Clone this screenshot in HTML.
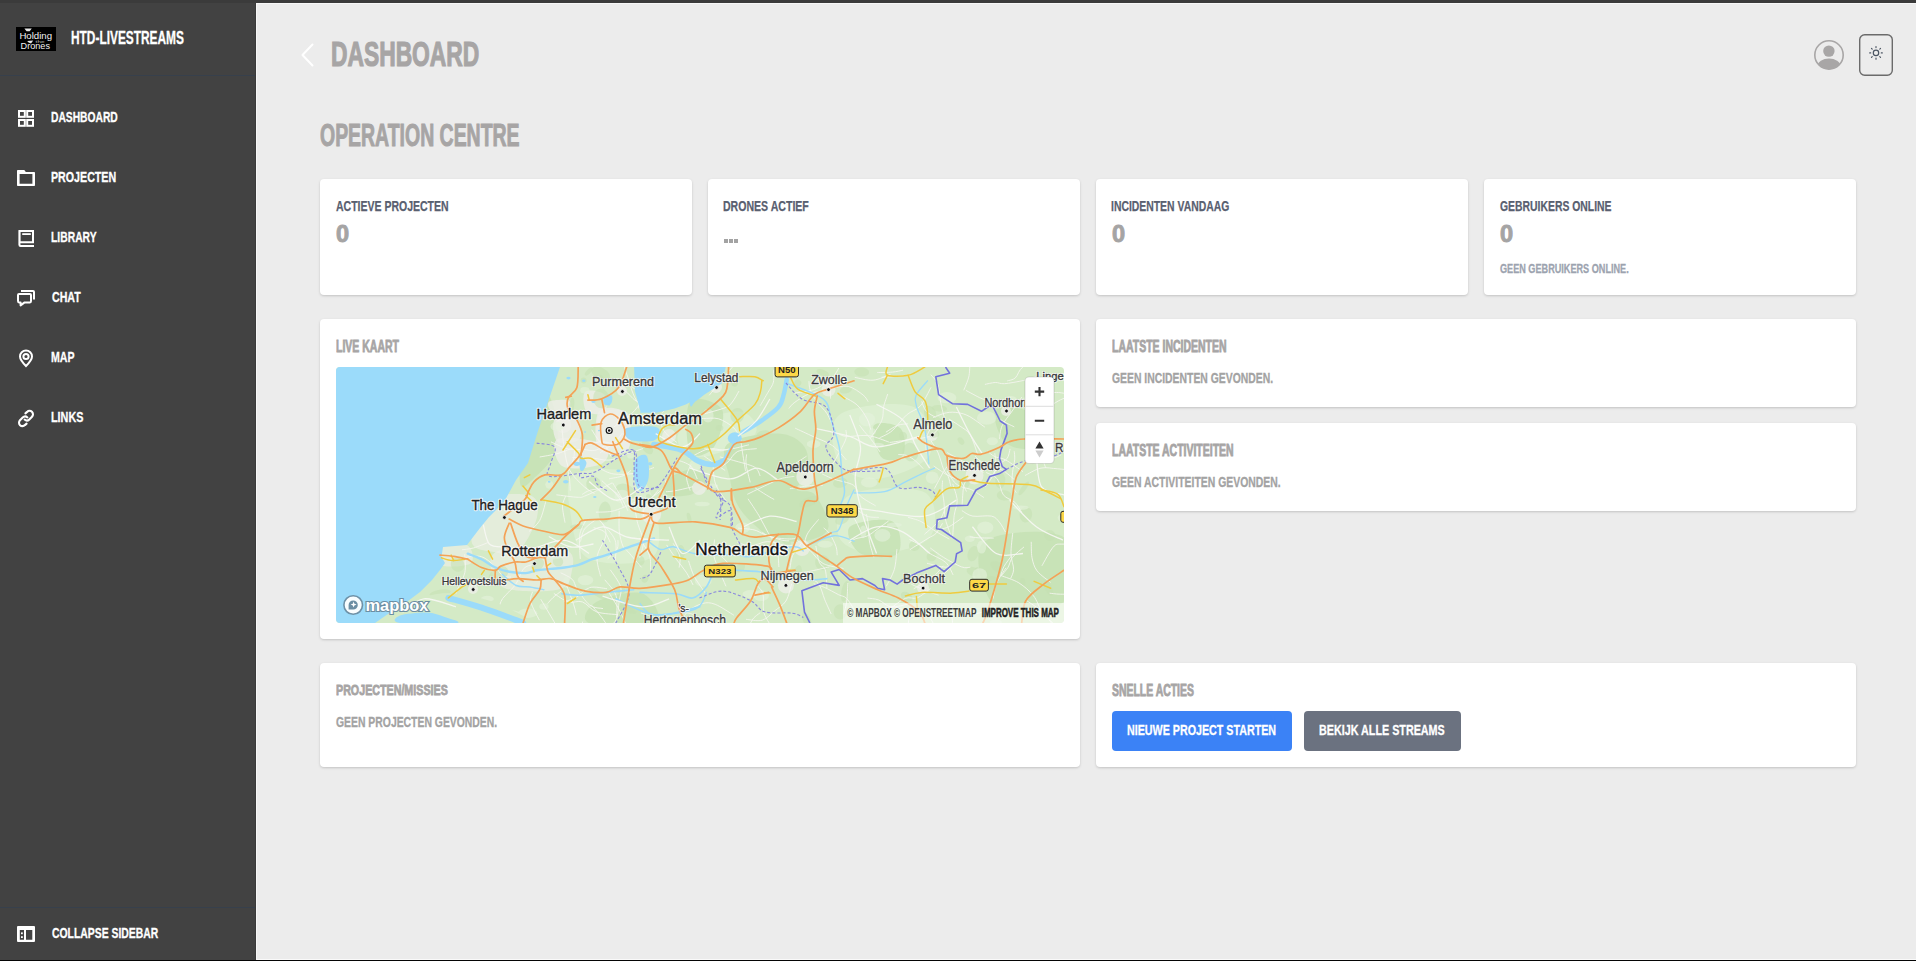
<!DOCTYPE html>
<html><head><meta charset="utf-8"><style>
html,body{margin:0;padding:0;width:1916px;height:961px;overflow:hidden;background:#ececec;font-family:"Liberation Sans",sans-serif;}
.t{position:absolute;white-space:nowrap;line-height:1;font-weight:700;transform-origin:0 0;}
.abs{position:absolute;}
.card{position:absolute;background:#fff;border-radius:4px;box-shadow:0 1px 3px rgba(0,0,0,0.12),0 1px 2px rgba(0,0,0,0.06);}
</style></head><body>
<div class="abs" style="left:0;top:0;width:256px;height:961px;background:#424242;"></div>
<div class="abs" style="left:255px;top:0;width:1px;height:961px;background:#3a3a3a;"></div>
<div class="abs" style="left:0;top:0;width:1916px;height:3px;background:#3b3b3b;"></div>
<div class="abs" style="left:256px;top:3px;width:1660px;height:1px;background:#f7f7f7;"></div>
<div class="abs" style="left:256px;top:3px;width:1px;height:957px;background:#f7f7f7;"></div>
<div class="abs" style="left:256px;top:959px;width:1660px;height:1px;background:#fafafa;"></div>
<div class="abs" style="left:0;top:960px;width:1916px;height:1px;background:#050505;"></div>
<div class="abs" style="left:0;top:75px;width:255px;height:1px;background:#37404c;"></div>
<div class="abs" style="left:0;top:907px;width:255px;height:1px;background:#37404c;"></div>

<div class="card" style="left:320px;top:179px;width:372px;height:116px;"></div>
<div class="card" style="left:708px;top:179px;width:372px;height:116px;"></div>
<div class="card" style="left:1096px;top:179px;width:372px;height:116px;"></div>
<div class="card" style="left:1484px;top:179px;width:372px;height:116px;"></div>
<div class="card" style="left:320px;top:319px;width:760px;height:320px;"></div>
<div class="card" style="left:1096px;top:319px;width:760px;height:88px;"></div>
<div class="card" style="left:1096px;top:423px;width:760px;height:88px;"></div>
<div class="card" style="left:320px;top:663px;width:760px;height:104px;"></div>
<div class="card" style="left:1096px;top:663px;width:760px;height:104px;"></div>

<div class="abs" style="left:1112px;top:711px;width:180px;height:40px;background:#3b82f6;border-radius:4px;"></div>
<div class="abs" style="left:1304px;top:711px;width:157px;height:40px;background:#6b7280;border-radius:4px;"></div>

<div class="abs" style="left:724px;top:239px;width:4px;height:4px;background:#a3a3a3;"></div>
<div class="abs" style="left:729px;top:239px;width:4px;height:4px;background:#a3a3a3;"></div>
<div class="abs" style="left:734px;top:239px;width:4px;height:4px;background:#a3a3a3;"></div>

<div class="abs" style="left:336px;top:367px;width:728px;height:256px;border-radius:4px;overflow:hidden;">
<svg width="728" height="256" viewBox="336 367 728 256" style="display:block;font-family:'Liberation Sans',sans-serif">
<rect x="336" y="367" width="728" height="256" fill="#d4eac6"/>
<path d="M683.5,427.5 C693.1,421.1 727.3,410.5 739.2,411.6 C751.2,412.6 760.5,426.4 755.2,433.9 C749.9,441.3 719.6,453.5 707.4,456.2 C695.2,458.8 685.9,454.6 681.9,449.8 C677.9,445.0 673.9,433.9 683.5,427.5 Z" fill="#dcefd1"/>
<path d="M839.2,414.9 C851.6,405.6 898.7,400.3 913.8,407.0 C928.9,413.6 936.0,442.9 929.7,454.9 C923.5,466.9 891.6,477.5 876.5,478.9 C861.4,480.2 845.4,473.6 839.2,462.9 C833.0,452.2 826.7,424.3 839.2,414.9 Z" fill="#dcefd1"/>
<path d="M849.8,494.9 C864.0,487.3 911.1,485.1 924.4,492.2 C937.7,499.3 937.7,527.3 929.7,537.5 C921.8,547.7 891.6,553.5 876.5,553.5 C861.4,553.5 843.6,547.3 839.2,537.5 C834.7,527.7 835.6,502.4 849.8,494.9 Z" fill="#dcefd1"/>
<path d="M575.8,473.6 C587.8,467.8 629.1,465.6 642.4,478.9 C655.7,492.2 664.6,540.2 655.7,553.5 C646.9,566.8 603.3,565.5 589.1,558.8 C574.9,552.2 572.7,527.8 570.5,513.5 C568.3,499.3 563.8,479.4 575.8,473.6 Z" fill="#dcefd1"/>
<path d="M727.3,444.3 C735.3,436.7 765.0,433.2 777.9,433.6 C790.8,434.0 799.7,440.3 804.5,446.9 C809.4,453.6 808.5,466.4 807.2,473.6 C805.9,480.7 795.2,486.0 796.6,489.5 C797.9,493.1 809.9,488.6 815.2,494.9 C820.5,501.1 829.4,519.3 828.5,526.8 C827.6,534.4 818.3,537.9 809.9,540.1 C801.4,542.4 786.8,542.4 777.9,540.1 C769.0,537.9 763.3,532.6 756.6,526.8 C749.9,521.1 742.4,513.5 737.9,505.5 C733.5,497.5 731.7,489.1 730.0,478.9 C728.2,468.7 719.3,451.8 727.3,444.3 Z" fill="#c6e2b5" opacity="0.9"/>
<path d="M669.2,478.5 C673.9,474.2 688.5,468.4 694.6,468.9 C700.8,469.4 706.3,477.4 705.8,481.6 C705.3,485.9 698.1,492.3 691.5,494.4 C684.8,496.5 669.7,497.0 666.0,494.4 C662.3,491.7 664.4,482.7 669.2,478.5 Z" fill="#c6e2b5" opacity="0.9"/>
<path d="M873.8,425.6 C876.9,420.7 895.6,423.4 900.4,428.3 C905.3,433.2 906.2,450.0 903.1,454.9 C900.0,459.8 886.7,462.5 881.8,457.6 C876.9,452.7 870.7,430.5 873.8,425.6 Z" fill="#c6e2b5" opacity="0.9"/>
<path d="M983.0,542.8 C994.3,531.3 1050.5,527.7 1064.0,537.5 C1077.5,547.3 1075.3,589.9 1064.0,601.4 C1052.7,613.0 1009.8,616.5 996.3,606.7 C982.8,597.0 971.7,554.4 983.0,542.8 Z" fill="#c6e2b5" opacity="0.9"/>
<path d="M996.3,409.6 C1001.7,405.2 1030.5,408.7 1036.3,414.9 C1042.1,421.2 1036.3,442.5 1031.0,446.9 C1025.6,451.4 1010.1,447.8 1004.3,441.6 C998.6,435.4 991.0,414.1 996.3,409.6 Z" fill="#c6e2b5" opacity="0.9"/>
<path d="M527.8,415.0 C532.7,400.8 544.3,391.0 549.2,396.3 C554.0,401.6 559.8,433.2 557.2,446.9 C554.5,460.7 539.4,473.1 533.2,478.9 C527.0,484.7 520.7,492.2 519.9,481.6 C519.0,470.9 523.0,429.2 527.8,415.0 Z" fill="#c6e2b5" opacity="0.9"/>
<path d="M690.0,401.6 C695.3,394.5 718.0,402.1 722.0,409.6 C726.0,417.2 719.3,439.8 714.0,446.9 C708.6,454.0 694.0,459.8 690.0,452.2 C686.0,444.7 684.7,408.7 690.0,401.6 Z" fill="#c6e2b5" opacity="0.9"/>
<path d="M849.8,526.8 C855.2,521.5 884.5,517.1 892.5,521.5 C900.4,525.9 903.1,548.1 897.8,553.5 C892.5,558.8 868.5,557.9 860.5,553.5 C852.5,549.0 844.5,532.2 849.8,526.8 Z" fill="#c6e2b5" opacity="0.9"/>
<path d="M597.1,601.5 C606.0,596.5 632.7,589.9 642.4,593.5 C652.2,597.1 664.6,618.1 655.7,623.1 C646.9,628.0 598.9,626.7 589.1,623.1 C579.4,619.5 588.2,606.4 597.1,601.5 Z" fill="#c6e2b5" opacity="0.9"/>
<path d="M481.5,501.1 C491.2,493.2 520.7,492.8 530.0,495.5 C539.2,498.3 539.0,508.2 536.9,517.7 C534.8,527.1 524.4,546.5 517.5,552.3 C510.6,558.1 503.0,553.9 495.4,552.3 C487.8,550.7 474.1,551.1 471.8,542.6 C469.5,534.1 471.8,508.9 481.5,501.1 Z" fill="#efefe9" opacity="0.6"/>
<path d="M495.4,552.3 C505.8,546.1 551.9,546.1 564.6,549.5 C577.3,553.0 572.7,566.4 571.5,573.1 C570.4,579.7 569.2,587.4 557.7,589.7 C546.1,592.0 512.7,593.1 502.3,586.9 C491.9,580.7 485.0,558.5 495.4,552.3 Z" fill="#efefe9" opacity="0.6"/>
<path d="M440.0,544.0 C444.6,540.8 462.6,542.1 467.7,545.4 C472.8,548.6 475.1,560.1 470.5,563.4 C465.8,566.6 445.1,568.0 440.0,564.8 C434.9,561.5 435.4,547.2 440.0,544.0 Z" fill="#efefe9" opacity="0.6"/>
<path d="M599.1,414.8 C603.6,408.7 623.0,407.3 627.8,413.2 C632.5,419.0 632.3,443.7 627.8,449.8 C623.3,455.9 605.5,455.6 600.7,449.8 C595.9,444.0 594.6,420.9 599.1,414.8 Z" fill="#efefe9" opacity="0.6"/>
<circle cx="563.3" cy="425" r="8" fill="#efefe9" opacity="0.75"/>
<circle cx="651.2" cy="514" r="10" fill="#efefe9" opacity="0.75"/>
<circle cx="805.3" cy="477" r="9" fill="#efefe9" opacity="0.75"/>
<circle cx="716" cy="387" r="6" fill="#efefe9" opacity="0.75"/>
<circle cx="828.5" cy="389.6" r="7" fill="#efefe9" opacity="0.75"/>
<circle cx="974.5" cy="475.4" r="9" fill="#efefe9" opacity="0.75"/>
<circle cx="785.9" cy="585.4" r="8" fill="#efefe9" opacity="0.75"/>
<circle cx="802" cy="548" r="8" fill="#efefe9" opacity="0.75"/>
<circle cx="932" cy="435" r="6" fill="#efefe9" opacity="0.75"/>
<circle cx="699" cy="488" r="7" fill="#efefe9" opacity="0.75"/>
<circle cx="669" cy="436" r="7" fill="#efefe9" opacity="0.75"/>
<circle cx="923" cy="588" r="6" fill="#efefe9" opacity="0.75"/>
<circle cx="1006" cy="411" r="5" fill="#efefe9" opacity="0.75"/>
<circle cx="473" cy="589" r="5" fill="#efefe9" opacity="0.75"/>
<circle cx="622" cy="391" r="5" fill="#efefe9" opacity="0.75"/>
<path d="M554.7,419.6 C557.9,415.7 572.7,415.0 576.8,418.2 C581.0,421.4 582.8,435.0 579.6,438.9 C576.4,442.9 561.6,444.9 557.5,441.7 C553.3,438.5 551.5,423.5 554.7,419.6 Z" fill="#eeeee8" opacity="0.8"/>
<path d="M599.0,411.3 C603.6,405.3 621.8,407.6 626.7,414.0 C631.5,420.5 632.6,444.0 628.0,450.0 C623.4,456.0 603.8,456.5 599.0,450.0 C594.1,443.6 594.4,417.3 599.0,411.3 Z" fill="#eeeee8" opacity="0.8"/>
<path d="M557.5,438.9 C564.4,435.3 597.1,440.3 604.5,444.5 C611.9,448.6 608.7,460.2 601.7,463.8 C594.8,467.5 570.4,470.8 563.0,466.6 C555.6,462.5 550.6,442.6 557.5,438.9 Z" fill="#eeeee8" opacity="0.8"/>
<path d="M585.1,391.9 C588.1,389.1 601.3,391.2 604.5,394.7 C607.7,398.1 607.5,409.9 604.5,412.7 C601.5,415.4 589.8,414.7 586.5,411.3 C583.3,407.8 582.1,394.7 585.1,391.9 Z" fill="#eeeee8" opacity="0.8"/>
<path d="M549.2,401.6 C551.9,399.7 565.3,399.1 568.5,400.2 C571.8,401.4 571.3,406.7 568.5,408.5 C565.8,410.3 555.2,412.4 551.9,411.3 C548.7,410.1 546.4,403.4 549.2,401.6 Z" fill="#eeeee8" opacity="0.8"/>
<ellipse cx="571.8" cy="405.6" rx="8.2" ry="2.4" transform="rotate(96 571.8 405.6)" fill="#c4e0b3" opacity="0.55"/>
<ellipse cx="602.2" cy="381.8" rx="7.1" ry="2.2" transform="rotate(78 602.2 381.8)" fill="#c4e0b3" opacity="0.55"/>
<ellipse cx="645.0" cy="578.7" rx="4.0" ry="3.3" transform="rotate(113 645.0 578.7)" fill="#c4e0b3" opacity="0.55"/>
<ellipse cx="1025.9" cy="514.7" rx="6.2" ry="7.9" transform="rotate(8 1025.9 514.7)" fill="#c4e0b3" opacity="0.55"/>
<ellipse cx="961.0" cy="441.1" rx="4.2" ry="2.7" transform="rotate(56 961.0 441.1)" fill="#c4e0b3" opacity="0.55"/>
<ellipse cx="930.1" cy="413.3" rx="7.7" ry="5.8" transform="rotate(67 930.1 413.3)" fill="#c4e0b3" opacity="0.55"/>
<ellipse cx="734.8" cy="383.1" rx="3.5" ry="3.2" transform="rotate(122 734.8 383.1)" fill="#c4e0b3" opacity="0.55"/>
<ellipse cx="647.3" cy="447.4" rx="7.7" ry="4.7" transform="rotate(54 647.3 447.4)" fill="#c4e0b3" opacity="0.55"/>
<ellipse cx="914.3" cy="545.9" rx="5.0" ry="5.4" transform="rotate(95 914.3 545.9)" fill="#c4e0b3" opacity="0.55"/>
<ellipse cx="973.1" cy="553.7" rx="5.3" ry="7.9" transform="rotate(21 973.1 553.7)" fill="#c4e0b3" opacity="0.55"/>
<ellipse cx="640.4" cy="560.8" rx="4.2" ry="4.9" transform="rotate(7 640.4 560.8)" fill="#c4e0b3" opacity="0.55"/>
<ellipse cx="822.5" cy="562.7" rx="7.6" ry="7.3" transform="rotate(56 822.5 562.7)" fill="#c4e0b3" opacity="0.55"/>
<ellipse cx="842.2" cy="519.2" rx="7.6" ry="4.7" transform="rotate(151 842.2 519.2)" fill="#c4e0b3" opacity="0.55"/>
<ellipse cx="1023.7" cy="488.4" rx="8.3" ry="2.4" transform="rotate(126 1023.7 488.4)" fill="#c4e0b3" opacity="0.55"/>
<ellipse cx="807.1" cy="621.2" rx="9.6" ry="3.7" transform="rotate(69 807.1 621.2)" fill="#c4e0b3" opacity="0.55"/>
<ellipse cx="822.8" cy="372.8" rx="6.7" ry="3.0" transform="rotate(21 822.8 372.8)" fill="#c4e0b3" opacity="0.55"/>
<ellipse cx="620.6" cy="590.1" rx="3.6" ry="4.7" transform="rotate(99 620.6 590.1)" fill="#c4e0b3" opacity="0.55"/>
<ellipse cx="979.1" cy="576.7" rx="9.9" ry="3.7" transform="rotate(75 979.1 576.7)" fill="#c4e0b3" opacity="0.55"/>
<ellipse cx="597.2" cy="593.4" rx="10.7" ry="2.9" transform="rotate(32 597.2 593.4)" fill="#c4e0b3" opacity="0.55"/>
<ellipse cx="689.1" cy="517.8" rx="5.1" ry="2.0" transform="rotate(75 689.1 517.8)" fill="#c4e0b3" opacity="0.55"/>
<ellipse cx="604.8" cy="512.0" rx="10.6" ry="6.1" transform="rotate(93 604.8 512.0)" fill="#c4e0b3" opacity="0.55"/>
<ellipse cx="785.6" cy="540.1" rx="3.4" ry="7.4" transform="rotate(140 785.6 540.1)" fill="#c4e0b3" opacity="0.55"/>
<ellipse cx="972.6" cy="571.3" rx="6.1" ry="4.4" transform="rotate(19 972.6 571.3)" fill="#c4e0b3" opacity="0.55"/>
<ellipse cx="797.8" cy="382.9" rx="3.5" ry="3.3" transform="rotate(29 797.8 382.9)" fill="#c4e0b3" opacity="0.55"/>
<ellipse cx="583.6" cy="380.5" rx="3.0" ry="2.9" transform="rotate(18 583.6 380.5)" fill="#c4e0b3" opacity="0.55"/>
<ellipse cx="600.7" cy="373.5" rx="10.0" ry="5.7" transform="rotate(27 600.7 373.5)" fill="#c4e0b3" opacity="0.55"/>
<ellipse cx="601.1" cy="398.4" rx="9.8" ry="8.0" transform="rotate(84 601.1 398.4)" fill="#c4e0b3" opacity="0.55"/>
<ellipse cx="688.2" cy="389.0" rx="3.8" ry="4.1" transform="rotate(48 688.2 389.0)" fill="#c4e0b3" opacity="0.55"/>
<ellipse cx="939.4" cy="408.3" rx="3.2" ry="7.7" transform="rotate(95 939.4 408.3)" fill="#c4e0b3" opacity="0.55"/>
<ellipse cx="1048.3" cy="588.0" rx="8.6" ry="3.6" transform="rotate(66 1048.3 588.0)" fill="#c4e0b3" opacity="0.55"/>
<ellipse cx="457.6" cy="564.6" rx="7.3" ry="6.7" transform="rotate(59 457.6 564.6)" fill="#c4e0b3" opacity="0.55"/>
<ellipse cx="498.4" cy="574.7" rx="10.9" ry="7.1" transform="rotate(145 498.4 574.7)" fill="#c4e0b3" opacity="0.55"/>
<ellipse cx="931.7" cy="556.4" rx="4.8" ry="5.1" transform="rotate(64 931.7 556.4)" fill="#c4e0b3" opacity="0.55"/>
<ellipse cx="840.2" cy="611.9" rx="6.6" ry="7.6" transform="rotate(178 840.2 611.9)" fill="#c4e0b3" opacity="0.55"/>
<ellipse cx="1031.2" cy="460.3" rx="4.8" ry="3.4" transform="rotate(35 1031.2 460.3)" fill="#c4e0b3" opacity="0.55"/>
<ellipse cx="991.4" cy="582.2" rx="6.8" ry="5.9" transform="rotate(144 991.4 582.2)" fill="#c4e0b3" opacity="0.55"/>
<ellipse cx="998.3" cy="567.3" rx="9.0" ry="4.9" transform="rotate(32 998.3 567.3)" fill="#c4e0b3" opacity="0.55"/>
<ellipse cx="910.5" cy="452.1" rx="9.4" ry="7.8" transform="rotate(71 910.5 452.1)" fill="#c4e0b3" opacity="0.55"/>
<ellipse cx="628.2" cy="609.4" rx="8.8" ry="3.0" transform="rotate(23 628.2 609.4)" fill="#c4e0b3" opacity="0.55"/>
<ellipse cx="446.0" cy="598.6" rx="9.5" ry="2.9" transform="rotate(149 446.0 598.6)" fill="#c4e0b3" opacity="0.55"/>
<ellipse cx="1049.7" cy="535.3" rx="5.8" ry="5.3" transform="rotate(24 1049.7 535.3)" fill="#c4e0b3" opacity="0.55"/>
<ellipse cx="809.0" cy="501.8" rx="10.5" ry="4.6" transform="rotate(157 809.0 501.8)" fill="#c4e0b3" opacity="0.55"/>
<ellipse cx="937.4" cy="421.0" rx="5.0" ry="3.8" transform="rotate(43 937.4 421.0)" fill="#c4e0b3" opacity="0.55"/>
<ellipse cx="762.9" cy="433.4" rx="6.4" ry="2.8" transform="rotate(164 762.9 433.4)" fill="#c4e0b3" opacity="0.55"/>
<ellipse cx="593.6" cy="484.3" rx="7.7" ry="7.4" transform="rotate(76 593.6 484.3)" fill="#c4e0b3" opacity="0.55"/>
<ellipse cx="1004.1" cy="495.4" rx="7.3" ry="5.1" transform="rotate(3 1004.1 495.4)" fill="#c4e0b3" opacity="0.55"/>
<ellipse cx="656.4" cy="413.9" rx="3.0" ry="6.8" transform="rotate(31 656.4 413.9)" fill="#c4e0b3" opacity="0.55"/>
<ellipse cx="680.7" cy="552.6" rx="7.5" ry="4.0" transform="rotate(93 680.7 552.6)" fill="#c4e0b3" opacity="0.55"/>
<ellipse cx="740.4" cy="567.8" rx="3.8" ry="5.4" transform="rotate(45 740.4 567.8)" fill="#c4e0b3" opacity="0.55"/>
<ellipse cx="537.6" cy="564.7" rx="7.1" ry="5.4" transform="rotate(137 537.6 564.7)" fill="#c4e0b3" opacity="0.55"/>
<ellipse cx="1000.3" cy="480.5" rx="7.9" ry="5.0" transform="rotate(92 1000.3 480.5)" fill="#c4e0b3" opacity="0.55"/>
<ellipse cx="840.3" cy="482.8" rx="7.3" ry="4.9" transform="rotate(169 840.3 482.8)" fill="#c4e0b3" opacity="0.55"/>
<ellipse cx="845.0" cy="591.4" rx="10.5" ry="3.6" transform="rotate(101 845.0 591.4)" fill="#c4e0b3" opacity="0.55"/>
<ellipse cx="1022.7" cy="582.0" rx="4.1" ry="2.7" transform="rotate(80 1022.7 582.0)" fill="#c4e0b3" opacity="0.55"/>
<ellipse cx="906.7" cy="596.6" rx="4.2" ry="6.3" transform="rotate(119 906.7 596.6)" fill="#c4e0b3" opacity="0.55"/>
<ellipse cx="440.1" cy="593.0" rx="10.7" ry="3.3" transform="rotate(171 440.1 593.0)" fill="#c4e0b3" opacity="0.55"/>
<ellipse cx="625.9" cy="491.7" rx="10.9" ry="7.0" transform="rotate(29 625.9 491.7)" fill="#c4e0b3" opacity="0.55"/>
<ellipse cx="650.1" cy="499.0" rx="5.7" ry="3.2" transform="rotate(57 650.1 499.0)" fill="#c4e0b3" opacity="0.55"/>
<ellipse cx="861.7" cy="372.0" rx="7.4" ry="4.6" transform="rotate(3 861.7 372.0)" fill="#c4e0b3" opacity="0.55"/>
<ellipse cx="577.3" cy="526.7" rx="7.1" ry="2.4" transform="rotate(177 577.3 526.7)" fill="#c4e0b3" opacity="0.55"/>
<ellipse cx="909.9" cy="615.8" rx="3.8" ry="3.6" transform="rotate(7 909.9 615.8)" fill="#c4e0b3" opacity="0.55"/>
<ellipse cx="903.1" cy="436.2" rx="4.0" ry="4.5" transform="rotate(164 903.1 436.2)" fill="#c4e0b3" opacity="0.55"/>
<ellipse cx="932.2" cy="433.2" rx="4.2" ry="7.5" transform="rotate(103 932.2 433.2)" fill="#c4e0b3" opacity="0.55"/>
<ellipse cx="845.9" cy="389.9" rx="3.5" ry="6.1" transform="rotate(77 845.9 389.9)" fill="#c4e0b3" opacity="0.55"/>
<ellipse cx="797.9" cy="572.2" rx="3.7" ry="7.1" transform="rotate(12 797.9 572.2)" fill="#c4e0b3" opacity="0.55"/>
<ellipse cx="964.1" cy="483.2" rx="5.7" ry="5.3" transform="rotate(167 964.1 483.2)" fill="#c4e0b3" opacity="0.55"/>
<ellipse cx="719.6" cy="428.0" rx="3.9" ry="3.0" transform="rotate(9 719.6 428.0)" fill="#c4e0b3" opacity="0.55"/>
<ellipse cx="558.0" cy="561.4" rx="5.3" ry="5.0" transform="rotate(32 558.0 561.4)" fill="#c4e0b3" opacity="0.55"/>
<ellipse cx="588.6" cy="371.6" rx="5.0" ry="2.1" transform="rotate(132 588.6 371.6)" fill="#c4e0b3" opacity="0.55"/>
<ellipse cx="737.2" cy="415.5" rx="6.8" ry="7.6" transform="rotate(19 737.2 415.5)" fill="#c4e0b3" opacity="0.55"/>
<ellipse cx="932.2" cy="477.6" rx="6.5" ry="6.2" fill="#e4f2dc" opacity="0.6"/>
<ellipse cx="622.2" cy="496.7" rx="7.8" ry="6.9" fill="#e4f2dc" opacity="0.6"/>
<ellipse cx="585.5" cy="580.1" rx="7.9" ry="5.2" fill="#e4f2dc" opacity="0.6"/>
<ellipse cx="630.6" cy="456.0" rx="3.4" ry="2.6" fill="#e4f2dc" opacity="0.6"/>
<ellipse cx="969.8" cy="538.7" rx="5.0" ry="3.2" fill="#e4f2dc" opacity="0.6"/>
<ellipse cx="549.3" cy="484.6" rx="4.1" ry="4.2" fill="#e4f2dc" opacity="0.6"/>
<ellipse cx="527.6" cy="613.2" rx="9.8" ry="4.7" fill="#e4f2dc" opacity="0.6"/>
<ellipse cx="514.0" cy="614.2" rx="5.2" ry="3.8" fill="#e4f2dc" opacity="0.6"/>
<ellipse cx="336.8" cy="464.7" rx="6.3" ry="4.5" fill="#e4f2dc" opacity="0.6"/>
<ellipse cx="339.6" cy="434.6" rx="3.6" ry="4.0" fill="#e4f2dc" opacity="0.6"/>
<ellipse cx="557.5" cy="426.6" rx="7.1" ry="4.6" fill="#e4f2dc" opacity="0.6"/>
<ellipse cx="882.4" cy="535.3" rx="8.0" ry="6.4" fill="#e4f2dc" opacity="0.6"/>
<ellipse cx="619.6" cy="450.5" rx="9.9" ry="2.7" fill="#e4f2dc" opacity="0.6"/>
<ellipse cx="863.2" cy="531.7" rx="3.3" ry="6.2" fill="#e4f2dc" opacity="0.6"/>
<ellipse cx="985.3" cy="527.6" rx="8.1" ry="6.1" fill="#e4f2dc" opacity="0.6"/>
<ellipse cx="703.2" cy="580.7" rx="8.6" ry="6.1" fill="#e4f2dc" opacity="0.6"/>
<ellipse cx="761.2" cy="595.6" rx="7.8" ry="5.5" fill="#e4f2dc" opacity="0.6"/>
<ellipse cx="742.6" cy="527.7" rx="7.4" ry="5.4" fill="#e4f2dc" opacity="0.6"/>
<ellipse cx="692.2" cy="367.8" rx="8.6" ry="5.7" fill="#e4f2dc" opacity="0.6"/>
<ellipse cx="702.2" cy="504.0" rx="7.6" ry="2.3" fill="#e4f2dc" opacity="0.6"/>
<ellipse cx="872.4" cy="431.6" rx="3.5" ry="3.3" fill="#e4f2dc" opacity="0.6"/>
<ellipse cx="867.0" cy="419.5" rx="8.2" ry="6.9" fill="#e4f2dc" opacity="0.6"/>
<ellipse cx="695.6" cy="464.9" rx="6.4" ry="5.4" fill="#e4f2dc" opacity="0.6"/>
<ellipse cx="894.4" cy="524.9" rx="7.5" ry="2.4" fill="#e4f2dc" opacity="0.6"/>
<ellipse cx="877.1" cy="444.9" rx="7.0" ry="2.1" fill="#e4f2dc" opacity="0.6"/>
<ellipse cx="825.2" cy="544.2" rx="7.7" ry="3.5" fill="#e4f2dc" opacity="0.6"/>
<ellipse cx="712.0" cy="486.0" rx="6.3" ry="2.6" fill="#e4f2dc" opacity="0.6"/>
<ellipse cx="986.6" cy="418.0" rx="9.8" ry="6.7" fill="#e4f2dc" opacity="0.6"/>
<ellipse cx="932.9" cy="614.8" rx="6.1" ry="3.3" fill="#e4f2dc" opacity="0.6"/>
<ellipse cx="488.8" cy="609.1" rx="4.5" ry="4.9" fill="#e4f2dc" opacity="0.6"/>
<ellipse cx="1029.6" cy="400.9" rx="8.7" ry="4.5" fill="#e4f2dc" opacity="0.6"/>
<ellipse cx="981.6" cy="547.1" rx="4.6" ry="6.5" fill="#e4f2dc" opacity="0.6"/>
<ellipse cx="689.9" cy="373.4" rx="3.0" ry="4.5" fill="#e4f2dc" opacity="0.6"/>
<ellipse cx="664.2" cy="444.3" rx="4.0" ry="3.7" fill="#e4f2dc" opacity="0.6"/>
<ellipse cx="566.1" cy="582.1" rx="3.0" ry="5.8" fill="#e4f2dc" opacity="0.6"/>
<ellipse cx="946.9" cy="397.7" rx="9.5" ry="5.6" fill="#e4f2dc" opacity="0.6"/>
<ellipse cx="992.3" cy="441.2" rx="5.6" ry="4.0" fill="#e4f2dc" opacity="0.6"/>
<ellipse cx="1063.1" cy="517.8" rx="5.5" ry="4.1" fill="#e4f2dc" opacity="0.6"/>
<ellipse cx="543.9" cy="606.5" rx="4.7" ry="3.3" fill="#e4f2dc" opacity="0.6"/>
<ellipse cx="708.0" cy="415.6" rx="5.6" ry="6.8" fill="#e4f2dc" opacity="0.6"/>
<ellipse cx="979.7" cy="574.9" rx="7.4" ry="6.6" fill="#e4f2dc" opacity="0.6"/>
<ellipse cx="1020.8" cy="507.6" rx="8.0" ry="2.2" fill="#e4f2dc" opacity="0.6"/>
<ellipse cx="869.2" cy="482.4" rx="8.3" ry="5.2" fill="#e4f2dc" opacity="0.6"/>
<ellipse cx="1010.7" cy="399.6" rx="6.3" ry="3.7" fill="#e4f2dc" opacity="0.6"/>
<ellipse cx="552.8" cy="556.2" rx="9.8" ry="3.3" fill="#e4f2dc" opacity="0.6"/>
<ellipse cx="813.6" cy="444.0" rx="6.9" ry="4.0" fill="#e4f2dc" opacity="0.6"/>
<ellipse cx="487.3" cy="598.9" rx="6.5" ry="3.1" fill="#e4f2dc" opacity="0.6"/>
<ellipse cx="995.8" cy="622.1" rx="6.1" ry="2.7" fill="#e4f2dc" opacity="0.6"/>
<ellipse cx="584.9" cy="390.3" rx="4.7" ry="3.3" fill="#e4f2dc" opacity="0.6"/>
<ellipse cx="750.7" cy="594.1" rx="8.2" ry="4.1" fill="#e4f2dc" opacity="0.6"/>
<path d="M637.3,501.2 C635.0,502.2 628.0,505.6 623.6,507.3 C619.3,509.0 615.9,510.5 611.2,511.4 C606.6,512.2 598.4,512.1 595.9,512.2" fill="none" stroke="#f6f6f1" stroke-width="1" opacity="0.85"/>
<path d="M911.3,584.2 C913.9,585.4 922.4,589.4 926.9,591.2 C931.5,593.0 936.7,594.5 938.6,595.1" fill="none" stroke="#f6f6f1" stroke-width="1" opacity="0.85"/>
<path d="M928.8,614.8 C930.4,617.9 935.4,627.7 938.3,633.1 C941.2,638.4 942.8,644.0 946.3,647.2 C949.7,650.3 956.8,651.1 958.9,651.9" fill="none" stroke="#f6f6f1" stroke-width="1" opacity="0.85"/>
<path d="M1010.7,578.4 C1011.2,576.8 1013.6,573.3 1013.6,569.3 C1013.7,565.3 1011.2,560.2 1011.0,554.2 C1010.8,548.2 1012.4,536.6 1012.7,533.1" fill="none" stroke="#f6f6f1" stroke-width="1" opacity="0.85"/>
<path d="M861.4,532.7 C859.9,529.9 855.6,519.4 852.6,516.0 C849.6,512.7 846.3,513.7 843.5,512.4 C840.8,511.1 837.2,509.1 836.0,508.4" fill="none" stroke="#f6f6f1" stroke-width="1" opacity="0.85"/>
<path d="M856.5,613.4 C854.9,610.9 849.7,601.7 846.7,598.6 C843.7,595.5 842.3,596.6 838.6,594.7 C834.8,592.8 828.4,589.1 824.2,587.3 C820.1,585.5 815.4,584.4 813.7,583.8" fill="none" stroke="#f6f6f1" stroke-width="1" opacity="0.85"/>
<path d="M773.6,369.7 C773.5,371.7 774.3,378.4 773.4,382.1 C772.5,385.9 770.3,388.2 768.1,392.2 C765.8,396.1 761.5,403.5 760.2,405.7" fill="none" stroke="#f6f6f1" stroke-width="1" opacity="0.85"/>
<path d="M808.9,381.2 C809.2,382.7 808.9,386.7 810.3,390.2 C811.7,393.7 814.5,398.4 817.3,402.3 C820.0,406.1 824.1,409.0 827.0,413.6 C829.8,418.2 833.3,427.2 834.5,430.0" fill="none" stroke="#f6f6f1" stroke-width="1" opacity="0.85"/>
<path d="M599.8,468.5 C602.1,469.4 607.8,473.2 613.8,474.0 C619.7,474.8 628.6,474.3 635.3,473.3 C642.0,472.2 650.9,468.5 654.0,467.5" fill="none" stroke="#f6f6f1" stroke-width="1" opacity="0.85"/>
<path d="M889.6,442.5 C893.0,442.0 903.2,440.6 909.9,439.5 C916.7,438.4 925.1,438.5 930.4,436.0 C935.7,433.5 940.0,426.3 941.9,424.4" fill="none" stroke="#f6f6f1" stroke-width="1" opacity="0.85"/>
<path d="M1007.2,380.9 C1008.5,380.4 1012.7,380.3 1015.3,377.9 C1018.0,375.5 1018.6,370.0 1023.0,366.8 C1027.4,363.6 1034.9,360.3 1041.7,358.6 C1048.4,357.0 1059.9,357.1 1063.6,356.8" fill="none" stroke="#f6f6f1" stroke-width="1" opacity="0.85"/>
<path d="M1014.2,451.3 C1014.3,452.7 1015.0,456.1 1014.7,459.7 C1014.4,463.3 1012.8,468.5 1012.5,472.8 C1012.1,477.1 1011.9,482.2 1012.5,485.5 C1013.2,488.8 1015.6,491.4 1016.2,492.6" fill="none" stroke="#f6f6f1" stroke-width="1" opacity="0.85"/>
<path d="M539.7,457.0 C542.7,456.4 552.0,455.1 558.0,453.4 C563.9,451.7 572.6,447.9 575.5,446.7" fill="none" stroke="#f6f6f1" stroke-width="1" opacity="0.85"/>
<path d="M560.7,572.8 C562.7,573.9 569.5,576.6 572.2,579.3 C575.0,582.0 574.2,584.6 577.1,588.9 C580.0,593.2 585.4,601.8 589.7,605.1 C594.0,608.4 600.8,608.0 603.0,608.6" fill="none" stroke="#f6f6f1" stroke-width="1" opacity="0.85"/>
<path d="M927.0,563.3 C930.1,563.9 941.1,567.2 945.9,567.2 C950.6,567.1 954.1,563.6 955.7,562.9" fill="none" stroke="#f6f6f1" stroke-width="1" opacity="0.85"/>
<path d="M600.2,452.8 C602.7,451.0 611.2,445.5 614.9,442.2 C618.6,438.9 621.2,434.6 622.4,433.1" fill="none" stroke="#f6f6f1" stroke-width="1" opacity="0.85"/>
<path d="M1001.1,575.6 C1004.0,576.8 1013.4,579.5 1018.9,582.9 C1024.3,586.3 1029.8,591.2 1033.5,595.8 C1037.1,600.4 1039.6,608.1 1040.9,610.6" fill="none" stroke="#f6f6f1" stroke-width="1" opacity="0.85"/>
<path d="M574.6,448.8 C574.4,450.6 574.5,456.0 573.4,459.5 C572.4,463.0 568.9,466.6 568.3,469.7 C567.6,472.8 569.1,474.6 569.5,478.1 C569.8,481.6 570.2,488.6 570.3,490.7" fill="none" stroke="#f6f6f1" stroke-width="1" opacity="0.85"/>
<path d="M1049.6,593.2 C1051.4,593.3 1055.0,594.1 1060.5,594.2 C1065.9,594.4 1077.3,593.0 1082.3,594.0 C1087.4,595.0 1089.3,599.2 1090.6,600.3" fill="none" stroke="#f6f6f1" stroke-width="1" opacity="0.85"/>
<path d="M984.8,427.1 C982.2,425.3 973.8,418.8 969.3,416.4 C964.8,414.0 961.8,413.3 958.0,412.7 C954.2,412.1 950.6,411.9 946.4,412.8 C942.3,413.6 935.3,416.7 933.1,417.5" fill="none" stroke="#f6f6f1" stroke-width="1" opacity="0.85"/>
<path d="M540.8,599.3 C542.7,602.5 549.2,613.4 552.0,618.2 C554.8,623.0 556.6,626.3 557.6,627.9" fill="none" stroke="#f6f6f1" stroke-width="1" opacity="0.85"/>
<path d="M924.5,534.3 C927.0,531.9 935.9,524.8 939.4,520.4 C942.9,515.9 944.5,509.6 945.6,507.5" fill="none" stroke="#f6f6f1" stroke-width="1" opacity="0.85"/>
<path d="M608.2,591.5 C610.0,594.6 616.0,603.7 619.3,610.0 C622.6,616.3 626.6,626.0 628.0,629.2" fill="none" stroke="#f6f6f1" stroke-width="1" opacity="0.85"/>
<path d="M607.0,588.7 C604.1,588.5 594.9,586.1 589.7,587.6 C584.6,589.1 580.3,595.2 576.0,597.5 C571.7,599.9 565.8,601.0 563.8,601.7" fill="none" stroke="#f6f6f1" stroke-width="1" opacity="0.85"/>
<path d="M1001.4,575.6 C1002.5,574.2 1006.2,570.4 1008.0,567.4 C1009.9,564.3 1009.8,560.9 1012.5,557.4 C1015.1,554.0 1022.1,548.7 1024.0,546.9" fill="none" stroke="#f6f6f1" stroke-width="1" opacity="0.85"/>
<path d="M623.8,507.8 C622.7,505.8 621.2,500.3 617.5,495.8 C613.8,491.3 604.4,483.2 601.8,480.6" fill="none" stroke="#f6f6f1" stroke-width="1" opacity="0.85"/>
<path d="M822.2,474.0 C824.1,474.8 828.9,477.4 834.1,479.2 C839.2,481.1 848.9,482.3 853.3,485.1 C857.7,488.0 856.7,492.6 860.4,496.1 C864.1,499.6 873.2,504.3 875.7,505.9" fill="none" stroke="#f6f6f1" stroke-width="1" opacity="0.85"/>
<path d="M992.4,475.5 C993.5,473.6 996.8,467.2 999.2,464.3 C1001.7,461.5 1005.3,461.0 1007.1,458.5 C1009.0,455.9 1009.6,450.5 1010.1,448.9" fill="none" stroke="#f6f6f1" stroke-width="1" opacity="0.85"/>
<path d="M923.1,468.6 C921.9,467.3 918.4,463.3 915.8,461.2 C913.1,459.0 910.1,456.7 907.2,455.6 C904.3,454.5 899.8,454.7 898.3,454.5" fill="none" stroke="#f6f6f1" stroke-width="1" opacity="0.85"/>
<path d="M615.4,559.9 C615.3,556.6 617.2,546.2 615.1,540.2 C613.0,534.2 604.6,526.4 602.5,523.7" fill="none" stroke="#f6f6f1" stroke-width="1" opacity="0.85"/>
<path d="M565.0,522.6 C564.6,519.8 562.4,510.4 562.5,506.1 C562.6,501.7 565.1,497.9 565.6,496.3" fill="none" stroke="#f6f6f1" stroke-width="1" opacity="0.85"/>
<path d="M908.1,423.9 C906.3,424.1 901.3,423.9 897.6,425.3 C893.9,426.7 887.9,431.1 885.9,432.2" fill="none" stroke="#f6f6f1" stroke-width="1" opacity="0.85"/>
<path d="M713.0,465.2 C713.5,468.4 713.4,478.4 715.7,484.4 C718.0,490.5 724.9,498.7 726.7,501.6" fill="none" stroke="#f6f6f1" stroke-width="1" opacity="0.85"/>
<path d="M949.3,539.1 C947.0,537.7 939.8,533.9 935.1,531.0 C930.4,528.0 925.7,523.9 921.2,521.6 C916.6,519.3 910.2,518.0 908.0,517.3" fill="none" stroke="#f6f6f1" stroke-width="1" opacity="0.85"/>
<path d="M760.2,476.0 C759.2,474.5 758.9,469.7 754.5,467.1 C750.1,464.6 739.5,462.2 733.7,460.5 C728.0,458.8 722.2,457.5 719.9,456.9" fill="none" stroke="#f6f6f1" stroke-width="1" opacity="0.85"/>
<path d="M786.3,576.7 C786.9,575.3 788.8,571.9 789.8,568.4 C790.9,564.9 790.6,559.8 792.5,555.6 C794.5,551.4 799.9,545.5 801.4,543.4" fill="none" stroke="#f6f6f1" stroke-width="1" opacity="0.85"/>
<path d="M814.4,377.4 C816.9,379.0 824.1,385.5 829.7,387.0 C835.4,388.5 842.7,385.1 848.2,386.4 C853.8,387.7 859.8,392.4 863.1,395.0 C866.4,397.5 867.3,400.5 868.1,401.6" fill="none" stroke="#f6f6f1" stroke-width="1" opacity="0.85"/>
<path d="M840.2,395.1 C843.0,396.7 852.4,400.8 856.9,404.8 C861.4,408.8 864.9,415.0 867.2,419.1 C869.5,423.2 870.1,427.9 870.7,429.6" fill="none" stroke="#f6f6f1" stroke-width="1" opacity="0.85"/>
<path d="M942.5,523.3 C941.4,524.9 938.5,530.7 936.1,533.3 C933.6,535.8 932.0,535.8 927.6,538.6 C923.2,541.3 912.8,547.8 909.9,549.6" fill="none" stroke="#f6f6f1" stroke-width="1" opacity="0.85"/>
<path d="M704.4,448.7 C707.2,449.0 716.4,450.5 721.2,450.3 C726.1,450.1 731.5,448.1 733.5,447.6" fill="none" stroke="#f6f6f1" stroke-width="1" opacity="0.85"/>
<path d="M610.3,569.8 C612.1,572.6 619.2,581.7 620.7,586.9 C622.1,592.2 619.8,595.9 619.1,601.2 C618.4,606.5 618.2,614.3 616.6,618.7 C615.0,623.0 610.4,626.0 609.2,627.5" fill="none" stroke="#f6f6f1" stroke-width="1" opacity="0.85"/>
<path d="M726.0,586.3 C724.6,582.9 719.4,571.6 717.4,566.2 C715.3,560.8 714.0,558.2 713.6,553.7 C713.1,549.3 714.4,541.9 714.6,539.6" fill="none" stroke="#f6f6f1" stroke-width="1" opacity="0.85"/>
<path d="M464.7,557.4 C467.5,557.2 476.6,555.2 481.6,556.7 C486.6,558.1 491.1,563.1 494.6,566.3 C498.2,569.5 499.9,573.9 502.7,575.7 C505.4,577.5 509.6,576.9 511.0,577.1" fill="none" stroke="#f6f6f1" stroke-width="1" opacity="0.85"/>
<path d="M650.7,498.2 C652.8,496.5 661.1,491.1 663.6,487.9 C666.2,484.8 665.5,480.9 665.9,479.5" fill="none" stroke="#f6f6f1" stroke-width="1" opacity="0.85"/>
<path d="M748.9,444.8 C746.2,445.4 737.6,447.8 733.2,448.6 C728.7,449.5 726.6,449.8 722.4,449.9 C718.1,449.9 713.4,447.6 707.8,449.0 C702.2,450.4 691.9,456.8 688.8,458.3" fill="none" stroke="#f6f6f1" stroke-width="1" opacity="0.85"/>
<path d="M970.3,567.2 C968.8,567.2 966.0,568.6 961.5,566.9 C957.0,565.2 948.6,560.5 943.4,557.3 C938.2,554.1 932.5,549.5 930.3,548.0" fill="none" stroke="#f6f6f1" stroke-width="1" opacity="0.85"/>
<path d="M774.2,499.5 C772.9,498.8 769.9,497.2 766.7,495.2 C763.5,493.3 757.1,489.1 755.1,487.9" fill="none" stroke="#f6f6f1" stroke-width="1" opacity="0.85"/>
<path d="M903.0,370.2 C901.2,370.5 896.7,371.7 892.4,372.1 C888.1,372.5 879.8,372.5 877.3,372.5" fill="none" stroke="#f6f6f1" stroke-width="1" opacity="0.85"/>
<path d="M803.1,575.2 C805.5,576.5 814.3,579.0 817.9,583.1 C821.5,587.2 822.6,594.7 824.8,599.8 C827.0,605.0 830.1,611.6 831.2,614.0" fill="none" stroke="#f6f6f1" stroke-width="1" opacity="0.85"/>
<path d="M609.1,478.8 C611.5,478.3 619.5,477.1 623.1,475.8 C626.8,474.4 629.7,471.3 631.0,470.4" fill="none" stroke="#f6f6f1" stroke-width="1" opacity="0.85"/>
<path d="M580.3,558.9 C580.2,557.0 579.7,551.5 579.7,547.2 C579.7,542.9 578.9,537.8 580.1,533.1 C581.2,528.4 585.4,521.5 586.5,519.2" fill="none" stroke="#f6f6f1" stroke-width="1" opacity="0.85"/>
<path d="M529.1,531.4 C530.9,529.5 536.9,525.6 539.7,520.5 C542.5,515.4 544.9,504.1 546.0,500.8" fill="none" stroke="#f6f6f1" stroke-width="1" opacity="0.85"/>
<path d="M948.8,418.9 C950.7,420.1 956.5,423.5 960.1,426.2 C963.7,428.8 967.3,430.1 970.2,434.8 C973.1,439.5 976.4,451.1 977.7,454.3" fill="none" stroke="#f6f6f1" stroke-width="1" opacity="0.85"/>
<path d="M1050.6,582.4 C1048.4,580.5 1040.2,575.0 1037.1,570.9 C1034.0,566.8 1033.0,562.6 1032.0,557.7 C1031.1,552.9 1031.4,544.4 1031.2,541.8" fill="none" stroke="#f6f6f1" stroke-width="1" opacity="0.85"/>
<path d="M788.8,408.4 C789.8,407.4 791.3,404.7 794.8,402.3 C798.2,399.8 803.9,395.9 809.3,393.7 C814.7,391.5 822.3,391.9 827.0,389.1 C831.7,386.2 835.8,378.7 837.6,376.7" fill="none" stroke="#f6f6f1" stroke-width="1" opacity="0.85"/>
<path d="M600.6,576.3 C600.0,573.0 596.3,563.0 597.1,556.4 C598.0,549.9 604.4,542.0 605.6,537.0 C606.7,531.9 605.2,529.1 604.1,526.2 C602.9,523.3 599.6,520.7 598.7,519.6" fill="none" stroke="#f6f6f1" stroke-width="1" opacity="0.85"/>
<path d="M953.1,574.9 C951.9,572.8 949.6,566.0 945.6,562.3 C941.5,558.6 933.2,555.8 928.9,552.9 C924.6,550.0 923.0,547.2 919.8,544.9 C916.6,542.7 911.2,540.4 909.5,539.5" fill="none" stroke="#f6f6f1" stroke-width="1" opacity="0.85"/>
<path d="M591.5,605.1 C593.5,607.5 600.2,615.1 603.4,619.6 C606.7,624.0 607.5,627.9 611.1,632.1 C614.7,636.2 622.6,642.2 624.9,644.3" fill="none" stroke="#f6f6f1" stroke-width="1" opacity="0.85"/>
<path d="M910.4,375.0 C907.5,375.3 897.5,376.4 892.7,376.7 C887.9,377.1 883.5,377.1 881.6,377.2" fill="none" stroke="#f6f6f1" stroke-width="1" opacity="0.85"/>
<path d="M963.7,390.3 C964.6,387.9 967.9,381.3 969.0,375.9 C970.0,370.4 969.8,360.5 969.9,357.4" fill="none" stroke="#f6f6f1" stroke-width="1" opacity="0.85"/>
<path d="M936.8,614.6 C933.4,613.7 921.5,610.2 916.3,609.4 C911.0,608.7 909.6,610.5 905.3,610.0 C901.0,609.6 895.8,606.4 890.7,606.7 C885.6,607.1 877.3,611.2 874.6,612.1" fill="none" stroke="#f6f6f1" stroke-width="1" opacity="0.85"/>
<path d="M843.5,568.5 C840.1,567.6 828.7,566.5 823.1,563.5 C817.5,560.5 814.5,554.4 810.1,550.5 C805.7,546.5 799.0,541.6 796.8,539.8" fill="none" stroke="#f6f6f1" stroke-width="1" opacity="0.85"/>
<path d="M606.8,444.6 C604.8,445.6 598.7,449.6 594.8,450.4 C590.9,451.2 588.0,449.7 583.6,449.4 C579.1,449.2 573.6,450.2 568.1,448.9 C562.7,447.7 553.8,443.1 551.0,441.9" fill="none" stroke="#f6f6f1" stroke-width="1" opacity="0.85"/>
<path d="M806.5,456.2 C804.5,457.5 798.3,461.7 794.5,464.0 C790.7,466.3 785.3,469.0 783.5,470.0" fill="none" stroke="#f6f6f1" stroke-width="1" opacity="0.85"/>
<path d="M673.2,543.4 C674.3,545.5 678.8,552.2 679.8,556.2 C680.8,560.3 679.3,565.7 679.1,567.6" fill="none" stroke="#f6f6f1" stroke-width="1" opacity="0.85"/>
<path d="M847.9,583.0 C847.7,586.0 847.4,595.9 846.7,601.1 C846.1,606.2 844.5,611.6 844.0,613.7" fill="none" stroke="#f6f6f1" stroke-width="1" opacity="0.85"/>
<path d="M508.0,611.7 C506.8,612.9 503.6,617.0 501.0,619.2 C498.3,621.5 494.4,622.8 492.1,625.3 C489.9,627.8 488.6,630.8 487.5,634.3 C486.3,637.7 485.4,644.2 485.0,646.2" fill="none" stroke="#f6f6f1" stroke-width="1" opacity="0.85"/>
<path d="M999.5,438.9 C999.9,436.7 1000.0,430.2 1002.2,425.6 C1004.3,420.9 1009.0,415.7 1012.2,411.0 C1015.5,406.3 1020.2,399.4 1021.8,397.1" fill="none" stroke="#f6f6f1" stroke-width="1" opacity="0.85"/>
<path d="M673.3,403.3 C671.4,403.4 666.5,405.0 661.9,403.8 C657.3,402.5 650.9,398.8 645.9,396.0 C640.8,393.1 633.9,388.2 631.6,386.7" fill="none" stroke="#f6f6f1" stroke-width="1" opacity="0.85"/>
<path d="M951.9,538.0 C950.8,534.8 946.7,525.1 945.4,519.1 C944.1,513.2 944.5,507.1 944.0,502.2 C943.5,497.4 942.4,493.6 942.2,490.0 C942.0,486.4 942.5,482.2 942.5,480.6" fill="none" stroke="#f6f6f1" stroke-width="1" opacity="0.85"/>
<path d="M641.5,567.3 C639.3,564.8 631.5,555.8 628.5,552.2 C625.4,548.7 624.4,549.6 622.9,546.1 C621.4,542.6 620.0,537.1 619.3,531.3 C618.7,525.4 619.2,514.4 619.2,511.0" fill="none" stroke="#f6f6f1" stroke-width="1" opacity="0.85"/>
<path d="M987.2,451.0 C988.5,451.9 991.8,455.2 994.8,456.6 C997.8,458.1 1000.7,457.3 1005.4,459.8 C1010.1,462.3 1020.1,469.7 1023.1,471.7" fill="none" stroke="#f6f6f1" stroke-width="1" opacity="0.85"/>
<path d="M952.7,483.9 C953.5,486.7 956.9,495.1 957.2,500.3 C957.4,505.5 955.0,509.3 954.2,515.3 C953.5,521.3 953.0,533.0 952.7,536.5" fill="none" stroke="#f6f6f1" stroke-width="1" opacity="0.85"/>
<path d="M488.9,542.2 C486.4,543.2 477.9,546.7 473.4,548.0 C468.9,549.2 463.9,549.5 462.0,549.8" fill="none" stroke="#f6f6f1" stroke-width="1" opacity="0.85"/>
<path d="M614.0,382.7 C616.3,384.5 624.4,390.5 627.8,393.3 C631.3,396.2 631.6,397.8 634.7,399.9 C637.9,402.1 644.7,405.3 646.7,406.3" fill="none" stroke="#f6f6f1" stroke-width="1" opacity="0.85"/>
<path d="M1030.2,615.7 C1031.9,615.6 1037.5,614.2 1040.5,614.8 C1043.5,615.4 1045.9,617.0 1048.3,619.2 C1050.7,621.3 1053.6,626.3 1054.7,627.8" fill="none" stroke="#f6f6f1" stroke-width="1" opacity="0.85"/>
<path d="M803.5,551.5 C804.1,548.7 804.4,540.2 806.9,534.9 C809.4,529.5 816.7,522.0 818.6,519.4" fill="none" stroke="#f6f6f1" stroke-width="1" opacity="0.85"/>
<path d="M676.8,442.4 C674.9,440.8 668.3,436.2 665.6,433.0 C662.9,429.8 661.3,424.7 660.4,423.1" fill="none" stroke="#f6f6f1" stroke-width="1" opacity="0.85"/>
<path d="M848.7,543.0 C849.8,542.3 852.4,540.0 855.5,538.8 C858.6,537.6 863.5,537.6 867.1,536.0 C870.7,534.4 873.7,531.7 877.3,529.2 C880.8,526.7 886.7,522.4 888.6,521.0" fill="none" stroke="#f6f6f1" stroke-width="1" opacity="0.85"/>
<path d="M800.0,535.8 C798.6,536.3 796.5,538.7 791.7,538.9 C786.9,539.2 776.0,538.2 771.2,537.1 C766.3,536.0 763.8,533.2 762.4,532.4" fill="none" stroke="#f6f6f1" stroke-width="1" opacity="0.85"/>
<path d="M941.2,529.1 C942.6,528.6 946.1,528.3 949.8,526.3 C953.5,524.3 961.1,518.5 963.4,517.0" fill="none" stroke="#f6f6f1" stroke-width="1" opacity="0.85"/>
<path d="M757.1,585.7 C758.1,587.0 761.9,589.4 763.0,593.9 C764.2,598.5 762.2,606.8 764.0,613.0 C765.9,619.1 772.5,627.8 774.2,630.8" fill="none" stroke="#f6f6f1" stroke-width="1" opacity="0.85"/>
<path d="M778.9,567.0 C778.5,563.7 778.6,553.2 776.7,547.4 C774.9,541.6 770.7,537.4 767.8,532.1 C764.8,526.9 762.4,521.5 759.1,515.9 C755.8,510.4 749.9,501.7 748.0,498.8" fill="none" stroke="#f6f6f1" stroke-width="1" opacity="0.85"/>
<path d="M740.1,434.7 C740.4,437.3 741.3,444.4 742.2,450.4 C743.1,456.4 745.0,467.4 745.5,470.8" fill="none" stroke="#f6f6f1" stroke-width="1" opacity="0.85"/>
<path d="M845.9,430.1 C845.9,431.5 847.2,434.7 846.1,438.2 C845.1,441.7 842.4,446.7 839.8,451.3 C837.3,456.0 834.3,462.6 831.0,466.2 C827.6,469.9 821.6,472.1 819.7,473.2" fill="none" stroke="#f6f6f1" stroke-width="1" opacity="0.85"/>
<path d="M640.9,612.9 C643.6,613.7 653.2,617.4 657.3,617.6 C661.4,617.8 660.3,615.1 665.3,614.3 C670.3,613.5 682.1,612.6 687.2,612.9 C692.3,613.3 694.5,615.7 695.9,616.3" fill="none" stroke="#f6f6f1" stroke-width="1" opacity="0.85"/>
<path d="M688.5,560.8 C689.5,563.5 691.5,571.1 694.3,576.5 C697.2,581.9 703.6,590.5 705.4,593.3" fill="none" stroke="#f6f6f1" stroke-width="1" opacity="0.85"/>
<path d="M602.6,488.5 C600.5,488.8 593.3,489.3 589.9,490.3 C586.5,491.3 583.5,493.7 582.2,494.4" fill="none" stroke="#f6f6f1" stroke-width="1" opacity="0.85"/>
<path d="M934.4,488.6 C936.1,485.6 941.0,475.7 944.4,470.5 C947.8,465.3 952.9,459.5 954.6,457.3" fill="none" stroke="#f6f6f1" stroke-width="1" opacity="0.85"/>
<path d="M792.3,545.3 C790.9,545.2 787.9,545.7 783.8,545.1 C779.6,544.5 772.9,541.5 767.4,541.6 C761.9,541.8 755.6,545.8 750.6,545.9 C745.6,546.0 739.4,542.8 737.2,542.2" fill="none" stroke="#f6f6f1" stroke-width="1" opacity="0.85"/>
<path d="M409.2,605.2 C411.6,606.4 418.9,611.1 423.3,612.6 C427.6,614.1 433.4,614.1 435.4,614.4" fill="none" stroke="#f6f6f1" stroke-width="1" opacity="0.85"/>
<path d="M643.1,448.5 C639.8,449.6 629.1,453.3 623.4,455.2 C617.7,457.1 614.4,459.7 608.9,460.1 C603.3,460.6 596.3,458.2 590.2,457.8 C584.1,457.3 575.4,457.6 572.4,457.5" fill="none" stroke="#f6f6f1" stroke-width="1" opacity="0.85"/>
<path d="M630.6,384.2 C629.5,380.9 624.3,369.7 624.1,364.1 C623.9,358.5 628.1,354.2 629.3,350.4 C630.5,346.6 630.4,344.4 631.5,341.2 C632.7,338.0 635.4,333.0 636.2,331.3" fill="none" stroke="#f6f6f1" stroke-width="1" opacity="0.85"/>
<path d="M750.2,482.4 C749.5,479.4 746.7,469.1 746.1,464.4 C745.5,459.7 746.5,456.1 746.6,454.4" fill="none" stroke="#f6f6f1" stroke-width="1" opacity="0.85"/>
<path d="M888.8,442.0 C885.5,441.0 875.7,436.6 868.7,435.7 C861.8,434.8 852.1,436.7 847.2,436.5 C842.4,436.3 840.7,434.7 839.4,434.4" fill="none" stroke="#f6f6f1" stroke-width="1" opacity="0.85"/>
<path d="M931.0,387.4 C929.2,390.5 924.4,401.3 920.3,405.9 C916.2,410.5 911.2,410.8 906.5,415.0 C901.8,419.1 896.7,426.9 892.2,430.7 C887.7,434.6 881.6,436.7 879.5,437.9" fill="none" stroke="#f6f6f1" stroke-width="1" opacity="0.85"/>
<path d="M457.2,614.4 C460.3,615.2 469.6,617.8 475.8,619.4 C481.9,620.9 489.1,622.7 494.1,623.7 C499.2,624.7 502.0,624.3 505.8,625.6 C509.6,627.0 515.0,630.9 516.8,631.9" fill="none" stroke="#f6f6f1" stroke-width="1" opacity="0.85"/>
<path d="M610.2,542.3 C609.3,540.6 607.2,534.3 604.5,531.8 C601.7,529.4 595.4,528.3 593.6,527.6" fill="none" stroke="#f6f6f1" stroke-width="1" opacity="0.85"/>
<path d="M643.6,517.2 C643.8,515.5 642.3,511.8 644.8,507.3 C647.2,502.8 656.0,492.9 658.3,490.1" fill="none" stroke="#f6f6f1" stroke-width="1" opacity="0.85"/>
<path d="M443.0,616.7 C444.8,613.8 451.6,603.4 454.0,599.0 C456.3,594.6 455.2,594.7 457.1,590.4 C458.9,586.0 463.5,578.8 464.8,572.8 C466.1,566.8 464.8,557.4 464.7,554.3" fill="none" stroke="#f6f6f1" stroke-width="1" opacity="0.85"/>
<path d="M1014.3,426.9 C1011.7,425.4 1002.5,421.9 998.8,417.9 C995.0,414.0 995.0,406.7 991.8,403.3 C988.6,400.0 983.9,399.8 979.6,397.7 C975.3,395.5 968.2,391.6 965.9,390.4" fill="none" stroke="#f6f6f1" stroke-width="1" opacity="0.85"/>
<path d="M846.4,459.9 C844.0,457.5 837.9,449.5 832.4,445.6 C826.9,441.7 819.7,439.6 813.5,436.7 C807.3,433.8 798.2,429.6 795.2,428.2" fill="none" stroke="#f6f6f1" stroke-width="1" opacity="0.85"/>
<path d="M606.6,485.6 C608.3,486.9 614.0,491.2 616.8,493.4 C619.6,495.6 618.5,497.6 623.3,498.6 C628.0,499.5 641.5,499.0 645.1,499.1" fill="none" stroke="#f6f6f1" stroke-width="1" opacity="0.85"/>
<path d="M966.5,491.5 C965.5,489.8 963.4,484.1 960.2,481.4 C957.1,478.6 951.9,477.7 947.4,475.1 C943.0,472.5 935.9,467.5 933.7,466.0" fill="none" stroke="#f6f6f1" stroke-width="1" opacity="0.85"/>
<path d="M582.7,621.6 C582.2,624.2 581.9,632.7 579.9,637.2 C577.9,641.6 572.2,646.4 570.7,648.2" fill="none" stroke="#f6f6f1" stroke-width="1" opacity="0.85"/>
<path d="M1025.6,599.9 C1028.4,601.9 1039.0,608.6 1042.8,611.7 C1046.7,614.9 1046.2,616.6 1048.7,618.9 C1051.2,621.2 1052.8,624.3 1057.8,625.6 C1062.7,626.9 1075.1,626.6 1078.6,626.8" fill="none" stroke="#f6f6f1" stroke-width="1" opacity="0.85"/>
<path d="M704.7,413.8 C708.2,412.7 721.1,409.4 725.7,407.5 C730.3,405.5 730.1,404.8 732.3,402.1 C734.5,399.3 737.9,392.9 739.0,391.0" fill="none" stroke="#f6f6f1" stroke-width="1" opacity="0.85"/>
<path d="M993.2,598.6 C993.7,596.1 994.2,588.9 996.4,583.7 C998.5,578.6 1004.4,570.4 1006.0,567.8" fill="none" stroke="#f6f6f1" stroke-width="1" opacity="0.85"/>
<path d="M687.9,392.9 C685.4,394.3 677.2,398.3 672.9,401.7 C668.5,405.2 663.5,411.6 661.7,413.5" fill="none" stroke="#f6f6f1" stroke-width="1" opacity="0.85"/>
<path d="M887.7,394.0 C887.1,396.1 884.7,402.2 883.7,406.6 C882.7,411.0 883.9,415.4 881.7,420.6 C879.5,425.9 872.3,435.2 870.4,438.1" fill="none" stroke="#f6f6f1" stroke-width="1" opacity="0.85"/>
<path d="M985.5,486.8 C987.2,484.0 994.1,475.5 995.6,469.9 C997.2,464.4 994.9,456.1 994.8,453.3" fill="none" stroke="#f6f6f1" stroke-width="1" opacity="0.85"/>
<path d="M607.6,558.8 C609.2,557.2 615.3,552.3 617.0,549.2 C618.7,546.1 617.8,541.7 617.9,540.2" fill="none" stroke="#f6f6f1" stroke-width="1" opacity="0.85"/>
<path d="M1043.8,449.6 C1043.7,451.2 1042.7,456.5 1043.1,459.5 C1043.4,462.6 1045.3,466.5 1045.8,467.9" fill="none" stroke="#f6f6f1" stroke-width="1" opacity="0.85"/>
<path d="M855.6,508.7 C857.5,509.9 863.2,514.8 867.1,516.2 C871.0,517.7 876.9,517.2 878.8,517.4" fill="none" stroke="#f6f6f1" stroke-width="1" opacity="0.85"/>
<path d="M947.2,452.6 C949.3,453.8 956.2,457.7 959.8,459.6 C963.4,461.6 964.8,462.2 968.8,464.3 C972.7,466.5 981.1,471.1 983.5,472.4" fill="none" stroke="#f6f6f1" stroke-width="1" opacity="0.85"/>
<path d="M909.4,603.9 C906.3,604.3 896.1,607.4 891.0,606.8 C885.9,606.1 882.6,601.4 878.7,600.0 C874.8,598.5 869.4,598.4 867.5,598.1" fill="none" stroke="#f6f6f1" stroke-width="1" opacity="0.85"/>
<path d="M638.6,408.5 C638.6,405.7 639.0,396.9 638.9,391.6 C638.8,386.2 638.2,381.4 638.0,376.5 C637.7,371.6 637.4,364.7 637.3,362.3" fill="none" stroke="#f6f6f1" stroke-width="1" opacity="0.85"/>
<path d="M910.8,608.6 C910.3,612.0 907.7,623.1 907.9,629.1 C908.1,635.2 910.1,640.8 912.0,644.6 C913.9,648.5 918.1,651.0 919.3,652.2" fill="none" stroke="#f6f6f1" stroke-width="1" opacity="0.85"/>
<path d="M896.9,549.2 C896.5,552.6 896.1,563.3 894.3,569.5 C892.5,575.6 887.6,583.5 886.2,586.3" fill="none" stroke="#f6f6f1" stroke-width="1" opacity="0.85"/>
<path d="M823.7,527.9 C824.7,528.9 827.9,531.1 830.0,534.2 C832.0,537.3 834.8,543.0 836.0,546.5 C837.2,550.0 837.0,553.8 837.2,555.2" fill="none" stroke="#f6f6f1" stroke-width="1" opacity="0.85"/>
<path d="M926.2,452.8 C926.2,450.5 925.6,442.9 926.2,439.1 C926.8,435.3 928.1,433.0 929.8,429.9 C931.5,426.8 935.2,422.0 936.3,420.4" fill="none" stroke="#f6f6f1" stroke-width="1" opacity="0.85"/>
<path d="M746.0,619.3 C748.7,619.5 757.5,621.6 762.3,620.2 C767.0,618.8 770.5,614.2 774.5,611.0 C778.4,607.8 783.1,605.5 785.9,601.0 C788.8,596.4 790.7,586.7 791.6,583.9" fill="none" stroke="#f6f6f1" stroke-width="1" opacity="0.85"/>
<path d="M930.4,588.6 C928.2,590.1 921.5,596.1 917.3,597.8 C913.1,599.4 909.7,596.6 905.2,598.4 C900.7,600.2 893.8,606.1 890.2,608.7 C886.6,611.3 884.7,613.1 883.6,613.9" fill="none" stroke="#f6f6f1" stroke-width="1" opacity="0.85"/>
<path d="M921.7,401.4 C922.4,403.0 923.7,408.3 926.1,411.0 C928.4,413.7 934.0,416.3 935.6,417.4" fill="none" stroke="#f6f6f1" stroke-width="1" opacity="0.85"/>
<path d="M930.9,374.7 C932.0,376.3 936.2,379.8 937.8,384.1 C939.4,388.5 939.6,396.2 940.4,400.8 C941.3,405.5 941.8,408.0 942.8,411.9 C943.8,415.8 945.8,422.2 946.4,424.3" fill="none" stroke="#f6f6f1" stroke-width="1" opacity="0.85"/>
<path d="M822.9,485.3 C820.6,485.4 814.9,485.2 809.4,485.8 C803.9,486.4 793.2,488.2 789.9,488.7" fill="none" stroke="#f6f6f1" stroke-width="1" opacity="0.85"/>
<path d="M718.6,468.3 C720.2,467.2 724.9,464.7 728.1,461.9 C731.2,459.1 732.9,453.8 737.6,451.5 C742.4,449.3 753.5,449.1 756.7,448.6" fill="none" stroke="#f6f6f1" stroke-width="1" opacity="0.85"/>
<path d="M1000.5,575.7 C1001.1,574.1 1002.3,569.6 1004.1,566.3 C1006.0,563.0 1010.4,557.5 1011.6,555.7" fill="none" stroke="#f6f6f1" stroke-width="1" opacity="0.85"/>
<path d="M969.7,536.8 C971.2,536.9 974.6,537.6 978.6,537.8 C982.6,538.0 991.2,538.1 993.7,538.1" fill="none" stroke="#f6f6f1" stroke-width="1" opacity="0.85"/>
<path d="M1041.9,565.8 C1043.8,562.7 1049.9,550.8 1053.1,547.2 C1056.3,543.6 1057.0,544.2 1061.1,544.1 C1065.2,544.0 1072.8,544.2 1077.6,546.5 C1082.5,548.7 1088.0,555.8 1090.1,557.6" fill="none" stroke="#f6f6f1" stroke-width="1" opacity="0.85"/>
<path d="M793.4,573.4 C795.9,573.1 802.5,572.6 808.5,571.5 C814.5,570.4 825.9,567.7 829.3,566.9" fill="none" stroke="#f6f6f1" stroke-width="1" opacity="0.85"/>
<path d="M1014.4,479.6 C1012.3,478.0 1006.7,472.5 1001.7,469.8 C996.7,467.2 988.9,466.0 984.4,463.8 C980.0,461.5 976.6,457.5 975.0,456.2" fill="none" stroke="#f6f6f1" stroke-width="1" opacity="0.85"/>
<path d="M666.6,544.9 C668.3,547.4 673.4,555.2 676.7,559.7 C680.0,564.3 683.5,568.0 686.2,572.2 C688.9,576.4 692.0,582.9 693.1,585.0" fill="none" stroke="#f6f6f1" stroke-width="1" opacity="0.85"/>
<path d="M562.0,429.0 C562.5,432.6 563.2,443.5 564.5,450.5 C565.8,457.4 566.6,464.7 569.9,470.7 C573.1,476.7 580.0,482.7 584.1,486.6 C588.2,490.4 592.8,492.4 594.5,493.6" fill="none" stroke="#f6f6f1" stroke-width="1" opacity="0.85"/>
<path d="M532.5,591.9 C532.2,593.5 529.7,597.2 530.8,601.9 C531.9,606.7 537.9,617.2 539.4,620.2" fill="none" stroke="#f6f6f1" stroke-width="1" opacity="0.85"/>
<path d="M656.3,382.9 C654.4,385.3 649.1,392.3 644.8,397.6 C640.6,402.9 636.1,409.6 630.9,414.4 C625.7,419.3 616.7,424.8 613.9,426.9" fill="none" stroke="#f6f6f1" stroke-width="1" opacity="0.85"/>
<path d="M639.4,538.1 C641.1,540.9 647.5,549.9 649.4,555.3 C651.3,560.7 650.4,567.9 650.6,570.5" fill="none" stroke="#f6f6f1" stroke-width="1" opacity="0.85"/>
<path d="M873.8,557.3 C873.1,554.6 870.4,546.7 869.4,541.0 C868.5,535.4 868.6,527.7 868.1,523.2 C867.5,518.7 866.5,515.5 866.2,514.0" fill="none" stroke="#f6f6f1" stroke-width="1" opacity="0.85"/>
<path d="M634.8,507.8 C635.3,510.4 636.3,517.9 637.7,523.5 C639.2,529.2 643.0,535.9 643.3,541.6 C643.7,547.3 640.3,555.1 639.7,557.7" fill="none" stroke="#f6f6f1" stroke-width="1" opacity="0.85"/>
<path d="M612.3,482.8 C610.4,483.8 605.2,486.5 600.8,488.7 C596.4,490.8 589.8,494.1 586.0,495.5 C582.2,497.0 583.0,497.5 578.1,497.3 C573.1,497.2 560.0,495.2 556.4,494.8" fill="none" stroke="#f6f6f1" stroke-width="1" opacity="0.85"/>
<path d="M613.1,443.8 C610.9,443.5 605.3,441.5 600.0,441.9 C594.6,442.4 584.2,445.7 581.0,446.4" fill="none" stroke="#f6f6f1" stroke-width="1" opacity="0.85"/>
<path d="M576.3,615.1 C575.9,613.3 575.3,609.5 573.6,604.5 C572.0,599.5 567.7,588.3 566.5,585.1" fill="none" stroke="#f6f6f1" stroke-width="1" opacity="0.85"/>
<path d="M747.3,494.3 C750.6,492.7 761.5,487.4 767.1,484.8 C772.7,482.2 776.5,480.0 781.0,478.6 C785.5,477.2 792.1,476.8 794.3,476.4" fill="none" stroke="#f6f6f1" stroke-width="1" opacity="0.85"/>
<path d="M596.4,519.2 C594.4,520.9 587.2,525.3 584.6,529.0 C581.9,532.7 581.1,539.5 580.4,541.6" fill="none" stroke="#f6f6f1" stroke-width="1" opacity="0.85"/>
<path d="M627.9,510.7 C626.8,508.5 623.9,502.0 621.3,497.4 C618.8,492.8 614.2,485.4 612.7,483.0" fill="none" stroke="#f6f6f1" stroke-width="1" opacity="0.85"/>
<path d="M1061.2,454.9 C1059.2,455.4 1054.2,458.9 1049.2,458.2 C1044.2,457.5 1034.2,451.9 1031.1,450.6" fill="none" stroke="#f6f6f1" stroke-width="1" opacity="0.85"/>
<path d="M709.2,395.3 C711.4,392.6 718.0,384.5 722.6,379.0 C727.1,373.5 732.2,366.9 736.5,362.5 C740.8,358.1 744.6,354.8 748.4,352.8 C752.1,350.7 757.2,350.6 759.0,350.2" fill="none" stroke="#f6f6f1" stroke-width="1" opacity="0.85"/>
<path d="M986.2,472.5 C988.1,473.6 994.6,475.3 997.4,479.0 C1000.3,482.7 1000.4,491.0 1003.3,494.8 C1006.2,498.7 1011.8,499.4 1014.9,502.3 C1018.0,505.2 1020.6,510.8 1021.8,512.5" fill="none" stroke="#f6f6f1" stroke-width="1" opacity="0.85"/>
<path d="M838.8,368.0 C837.5,370.6 832.5,378.4 831.1,383.5 C829.7,388.6 830.6,396.0 830.5,398.5" fill="none" stroke="#f6f6f1" stroke-width="1" opacity="0.85"/>
<path d="M738.8,435.1 C737.8,433.8 736.2,429.7 732.9,427.0 C729.5,424.3 723.5,420.3 718.6,418.8 C713.7,417.4 707.3,418.6 703.4,418.5 C699.4,418.4 696.4,418.2 695.0,418.2" fill="none" stroke="#f6f6f1" stroke-width="1" opacity="0.85"/>
<path d="M693.0,486.7 C690.2,487.3 680.4,489.8 675.9,490.6 C671.4,491.5 667.6,491.6 665.9,491.8" fill="none" stroke="#f6f6f1" stroke-width="1" opacity="0.85"/>
<path d="M961.6,609.6 C963.7,610.3 968.9,614.2 974.3,613.9 C979.7,613.6 990.6,608.9 993.9,607.9" fill="none" stroke="#f6f6f1" stroke-width="1" opacity="0.85"/>
<path d="M760.2,612.7 C758.8,613.9 754.3,616.4 752.0,620.2 C749.7,624.0 747.2,631.6 746.5,635.4 C745.7,639.3 748.1,639.9 747.4,643.5 C746.6,647.0 742.6,654.5 741.7,656.7" fill="none" stroke="#f6f6f1" stroke-width="1" opacity="0.85"/>
<path d="M640.6,431.5 C641.7,429.5 644.6,422.9 647.0,419.7 C649.4,416.4 653.7,413.3 655.0,412.0" fill="none" stroke="#f6f6f1" stroke-width="1" opacity="0.85"/>
<path d="M561.1,591.1 C559.7,592.2 555.2,595.5 553.0,597.6 C550.7,599.7 548.5,602.6 547.6,603.6" fill="none" stroke="#f6f6f1" stroke-width="1" opacity="0.85"/>
<path d="M978.3,468.4 C976.8,470.0 971.5,475.3 969.1,478.1 C966.7,481.0 965.1,480.9 963.9,485.4 C962.8,489.8 962.4,501.6 962.1,504.8" fill="none" stroke="#f6f6f1" stroke-width="1" opacity="0.85"/>
<path d="M591.7,429.7 C593.0,431.7 597.1,438.6 599.5,441.4 C601.9,444.3 604.1,444.1 606.0,446.7 C608.0,449.2 610.3,455.1 611.2,456.8" fill="none" stroke="#f6f6f1" stroke-width="1" opacity="0.85"/>
<path d="M732.7,568.6 C730.5,566.3 723.7,557.6 719.5,554.6 C715.2,551.5 711.1,552.3 707.3,550.2 C703.5,548.2 698.5,543.5 696.7,542.2" fill="none" stroke="#f6f6f1" stroke-width="1" opacity="0.85"/>
<path d="M1033.7,420.3 C1036.2,418.1 1043.1,410.9 1048.7,407.0 C1054.4,403.2 1061.8,398.3 1067.6,397.3 C1073.4,396.3 1077.2,399.8 1083.5,400.9 C1089.8,402.0 1101.6,403.4 1105.2,403.9" fill="none" stroke="#f6f6f1" stroke-width="1" opacity="0.85"/>
<path d="M725.2,470.5 C723.9,469.6 720.6,467.5 717.1,465.1 C713.6,462.7 706.4,457.7 704.3,456.2" fill="none" stroke="#f6f6f1" stroke-width="1" opacity="0.85"/>
<path d="M532.9,564.6 C531.3,565.2 526.6,565.3 523.7,568.6 C520.8,572.0 519.0,579.6 515.5,584.6 C512.0,589.6 505.5,594.5 502.7,598.5 C499.9,602.4 499.5,606.7 498.8,608.4" fill="none" stroke="#f6f6f1" stroke-width="1" opacity="0.85"/>
<path d="M984.9,384.4 C986.6,384.1 992.1,382.6 995.4,382.5 C998.7,382.4 999.8,384.0 1004.6,383.7 C1009.3,383.3 1018.5,381.6 1023.7,380.4 C1029.0,379.2 1034.0,377.1 1036.1,376.4" fill="none" stroke="#f6f6f1" stroke-width="1" opacity="0.85"/>
<path d="M950.7,485.9 C950.3,484.3 949.3,479.1 948.2,476.4 C947.0,473.6 945.3,473.2 943.6,469.3 C941.9,465.4 940.2,457.6 938.1,452.9 C936.1,448.2 932.3,443.0 931.2,441.0" fill="none" stroke="#f6f6f1" stroke-width="1" opacity="0.85"/>
<path d="M815.8,546.0 C816.4,548.7 817.8,558.4 819.4,562.4 C821.0,566.4 824.1,565.7 825.3,570.0 C826.6,574.3 826.6,585.2 826.9,588.2" fill="none" stroke="#f6f6f1" stroke-width="1" opacity="0.85"/>
<path d="M854.8,377.4 C857.8,377.8 867.2,380.7 873.1,380.2 C879.1,379.7 887.6,375.3 890.5,374.3" fill="none" stroke="#f6f6f1" stroke-width="1" opacity="0.85"/>
<path d="M738.1,528.1 C740.8,528.4 749.6,528.8 754.0,529.9 C758.4,530.9 760.0,532.8 764.6,534.5 C769.1,536.2 777.2,539.0 781.3,540.0 C785.4,541.1 787.9,540.7 789.2,540.9" fill="none" stroke="#f6f6f1" stroke-width="1" opacity="0.85"/>
<path d="M943.4,565.8 C941.5,567.7 937.2,573.8 932.3,577.6 C927.3,581.4 916.8,586.9 913.7,588.8" fill="none" stroke="#f6f6f1" stroke-width="1" opacity="0.85"/>
<path d="M831.8,376.5 C830.7,377.6 828.4,380.8 825.3,383.0 C822.3,385.3 818.8,388.1 813.6,389.7 C808.4,391.4 797.5,392.5 794.3,393.1" fill="none" stroke="#f6f6f1" stroke-width="1" opacity="0.85"/>
<path d="M1025.0,475.5 C1027.6,474.3 1035.5,469.2 1041.0,468.1 C1046.4,467.0 1052.0,468.5 1057.7,468.8 C1063.4,469.1 1069.5,470.6 1075.2,469.7 C1080.8,468.8 1088.7,464.6 1091.5,463.6" fill="none" stroke="#f6f6f1" stroke-width="1" opacity="0.85"/>
<path d="M952.3,566.2 C950.0,568.2 942.8,575.3 938.7,577.8 C934.6,580.2 929.4,580.4 927.5,581.0" fill="none" stroke="#f6f6f1" stroke-width="1" opacity="0.85"/>
<path d="M733.8,615.2 C730.7,613.4 720.5,606.3 715.2,604.3 C710.0,602.4 707.0,602.3 702.4,603.5 C697.8,604.7 691.6,607.9 687.6,611.7 C683.6,615.6 679.9,624.2 678.3,626.7" fill="none" stroke="#f6f6f1" stroke-width="1" opacity="0.85"/>
<path d="M690.1,490.6 C689.5,488.3 686.4,481.1 686.5,476.8 C686.7,472.5 690.2,466.7 691.0,464.7" fill="none" stroke="#f6f6f1" stroke-width="1" opacity="0.85"/>
<path d="M553.9,593.5 C556.4,594.9 563.7,600.6 568.5,602.0 C573.2,603.4 577.7,600.2 582.4,601.9 C587.1,603.5 590.7,609.8 596.7,611.9 C602.7,614.0 614.7,614.2 618.2,614.7" fill="none" stroke="#f6f6f1" stroke-width="1" opacity="0.85"/>
<path d="M947.1,471.0 C948.3,472.8 951.8,479.3 954.2,482.0 C956.6,484.6 958.6,485.6 961.5,486.9 C964.5,488.2 968.1,488.1 971.9,489.9 C975.6,491.7 981.9,496.3 983.9,497.5" fill="none" stroke="#f6f6f1" stroke-width="1" opacity="0.85"/>
<path d="M677.2,459.9 C679.4,460.9 687.1,462.7 690.5,465.9 C693.8,469.0 696.2,476.8 697.3,479.0" fill="none" stroke="#f6f6f1" stroke-width="1" opacity="0.85"/>
<path d="M880.0,451.9 C878.6,449.9 874.0,443.2 871.4,439.8 C868.9,436.4 866.5,434.1 864.5,431.7 C862.5,429.3 860.4,426.3 859.6,425.3" fill="none" stroke="#f6f6f1" stroke-width="1" opacity="0.85"/>
<path d="M1005.4,532.0 C1004.4,530.4 1001.7,524.8 999.4,522.2 C997.1,519.6 996.0,517.1 991.5,516.1 C987.1,515.1 977.6,517.0 972.7,516.1 C967.7,515.2 963.7,511.5 961.9,510.6" fill="none" stroke="#f6f6f1" stroke-width="1" opacity="0.85"/>
<path d="M951.7,604.2 C951.8,607.3 951.9,617.9 952.6,622.6 C953.3,627.4 955.5,629.0 955.7,632.7 C955.8,636.5 953.9,640.4 953.6,645.1 C953.3,649.7 953.9,658.2 954.0,660.8" fill="none" stroke="#f6f6f1" stroke-width="1" opacity="0.85"/>
<path d="M604.8,579.8 C606.7,582.5 614.0,589.3 616.0,595.5 C617.9,601.8 616.5,613.9 616.6,617.5" fill="none" stroke="#f6f6f1" stroke-width="1" opacity="0.85"/>
<path d="M629.5,379.9 C629.9,381.6 630.1,385.9 631.7,389.9 C633.3,394.0 635.4,400.4 639.3,404.1 C643.2,407.9 652.3,411.1 654.9,412.5" fill="none" stroke="#f6f6f1" stroke-width="1" opacity="0.85"/>
<path d="M1042.0,390.0 C1043.8,390.4 1049.6,391.9 1052.8,392.4 C1056.0,392.9 1056.6,392.0 1061.2,392.8 C1065.9,393.5 1077.3,396.0 1080.5,396.6" fill="none" stroke="#f6f6f1" stroke-width="1" opacity="0.85"/>
<path d="M336.0,367.0 L560.0,367.0 L549.0,399.0 L538.0,431.0 L528.0,463.0 L516.0,480.0 L504.0,502.0 L489.0,517.0 L480.0,528.0 L467.0,545.0 L443.0,547.0 L441.5,557.0 L445.0,563.0 L440.0,570.0 L432.0,580.0 L420.0,592.0 L400.0,607.0 L388.0,614.0 L375.0,623.0 L336.0,623.0 Z" fill="#9bdbfa"/>
<path d="M400.0,608.0 C403.7,603.7 414.1,600.0 422.3,597.6 C430.5,595.1 439.9,593.1 449.1,593.1 C458.3,593.1 468.2,595.3 477.4,597.6 C486.6,599.8 496.7,602.2 504.2,606.5 C511.6,610.7 539.4,620.3 522.0,623.0 C504.7,625.8 420.3,625.5 400.0,623.0 C379.7,620.5 396.3,612.2 400.0,608.0 Z" fill="#d4eac6"/>
<path d="M400.0,615.4 C404.5,613.7 419.3,612.2 426.8,612.4 C434.2,612.7 439.7,615.1 444.6,616.9 C449.6,618.7 464.0,622.0 456.5,623.0 C449.1,624.0 409.4,624.3 400.0,623.0 C390.6,621.7 395.5,617.2 400.0,615.4 Z" fill="#9bdbfa"/>
<path d="M634.1,367.0 L634.9,390.9 L640.5,411.6 L640.0,412.7 L656.6,412.7 L674.6,408.5 L685.7,404.4 L702.3,396.1 L721.7,383.6 L725.8,367.0 Z" fill="#9bdbfa"/>
<path d="M626.2,428.3 C630.4,426.2 649.3,425.8 654.8,426.7 C660.4,427.6 660.1,431.5 659.6,433.9 C659.1,436.3 656.7,440.1 651.7,441.0 C646.6,442.0 633.6,441.6 629.4,439.5 C625.1,437.3 621.9,430.4 626.2,428.3 Z" fill="#9bdbfa"/>
<path d="M690.0,367.0 C693.3,360.8 707.3,363.0 710.0,367.0 C712.6,371.0 708.4,385.2 706.0,391.0 C703.5,396.7 698.0,399.4 695.3,401.6 C692.7,403.8 690.9,410.1 690.0,404.3 C689.1,398.5 686.7,373.2 690.0,367.0 Z" fill="#9bdbfa"/>
<path d="M653.8,444.5 C658.5,445.4 674.1,447.3 681.5,450.1 C688.9,452.8 693.1,458.7 698.1,461.1 C703.2,463.6 707.8,464.6 712.0,464.6 C716.1,464.6 721.2,461.7 723.1,461.1" fill="none" stroke="#9bdbfa" stroke-width="5.5" stroke-linecap="round"/>
<ellipse cx="734.8" cy="438.3" rx="7" ry="6" fill="#9bdbfa"/>
<path d="M723.1,461.1 C724.2,459.3 727.7,453.7 730.0,450.1 C732.3,446.4 735.7,440.8 736.9,439.0" fill="none" stroke="#9bdbfa" stroke-width="3" stroke-linecap="round"/>
<path d="M742.4,432.1 C745.2,430.4 753.0,426.5 759.0,422.4 C765.0,418.2 774.3,412.0 778.4,407.1 C782.6,402.3 782.6,397.9 784.0,393.3 C785.3,388.7 786.3,381.8 786.7,379.5" fill="none" stroke="#9bdbfa" stroke-width="4.5" stroke-linecap="round"/>
<path d="M635.7,459.4 C637.9,455.6 644.8,453.0 646.9,456.2 C649.0,459.4 649.5,472.6 648.5,478.5 C647.4,484.3 642.9,491.2 640.5,491.2 C638.1,491.2 634.9,483.8 634.1,478.5 C633.3,473.2 633.6,463.1 635.7,459.4 Z" fill="#9bdbfa"/>
<path d="M580.0,456.2 C581.1,455.1 585.8,460.2 586.4,462.5 C586.9,464.9 584.2,469.4 583.2,470.5 C582.1,471.6 580.5,471.3 580.0,468.9 C579.5,466.5 578.9,457.2 580.0,456.2 Z" fill="#9bdbfa"/>
<path d="M603.9,397.3 C605.1,395.8 610.7,394.6 611.8,395.7 C613.0,396.7 612.2,402.2 611.1,403.6 C609.9,405.1 605.9,405.5 604.7,404.4 C603.5,403.4 602.7,398.7 603.9,397.3 Z" fill="#9bdbfa"/>
<ellipse cx="568.5" cy="378.1" rx="2.1" ry="1.4" fill="#9bdbfa"/>
<ellipse cx="583.8" cy="380.8" rx="1.7" ry="1.2" fill="#9bdbfa"/>
<ellipse cx="593.4" cy="401.6" rx="2.1" ry="1.4" fill="#9bdbfa"/>
<ellipse cx="608.7" cy="404.4" rx="1.7" ry="1.1" fill="#9bdbfa"/>
<ellipse cx="576.8" cy="463.8" rx="3.5" ry="2.1" fill="#9bdbfa"/>
<ellipse cx="565.8" cy="481.8" rx="2.8" ry="1.7" fill="#9bdbfa"/>
<ellipse cx="618.4" cy="470.8" rx="2.1" ry="1.4" fill="#9bdbfa"/>
<ellipse cx="639.1" cy="477.7" rx="1.4" ry="5.5" fill="#9bdbfa"/>
<ellipse cx="650.2" cy="463.8" rx="2.1" ry="1.7" fill="#9bdbfa"/>
<ellipse cx="594.8" cy="497.0" rx="1.7" ry="1.1" fill="#9bdbfa"/>
<ellipse cx="549.2" cy="481.8" rx="1.4" ry="1.0" fill="#9bdbfa"/>
<ellipse cx="585.1" cy="432.0" rx="1.1" ry="0.8" fill="#9bdbfa"/>
<ellipse cx="599.0" cy="430.6" rx="1.1" ry="0.8" fill="#9bdbfa"/>
<path d="M467.7,553.7 C470.0,554.6 476.9,556.9 481.5,559.2 C486.1,561.5 490.8,565.4 495.4,567.5 C500.0,569.6 504.1,570.7 509.2,571.7 C514.3,572.6 521.2,573.3 525.8,573.1 C530.4,572.8 532.7,571.0 536.9,570.3 C541.1,569.6 546.1,569.4 550.7,568.9 C555.4,568.4 560.0,568.2 564.6,567.5 C569.2,566.8 573.8,566.1 578.4,564.8 C583.0,563.4 587.7,560.8 592.3,559.2 C596.9,557.6 599.2,557.4 606.1,555.1 C613.0,552.8 625.8,548.1 633.8,545.4 C641.8,542.6 650.6,539.6 654.0,538.4" fill="none" stroke="#9bdbfa" stroke-width="2.4" stroke-linejoin="round" stroke-linecap="round"/>
<path d="M502.3,574.4 C504.6,576.3 511.5,583.4 516.1,585.5 C520.7,587.6 525.4,586.2 530.0,586.9 C534.6,587.6 541.5,589.2 543.8,589.7" fill="none" stroke="#9bdbfa" stroke-width="1.5" stroke-linejoin="round" stroke-linecap="round"/>
<path d="M648.3,541.2 C650.4,542.6 656.6,548.6 660.8,549.5 C664.9,550.4 667.5,546.1 673.2,546.8 C679.0,547.4 684.8,552.3 695.4,553.7 C706.0,555.1 727.7,554.6 736.9,555.1 C746.1,555.5 741.5,557.8 750.7,556.4 C760.0,555.1 783.5,547.7 792.3,546.8 C801.0,545.8 801.5,550.2 803.3,550.9" fill="none" stroke="#9bdbfa" stroke-width="1.5" stroke-linejoin="round" stroke-linecap="round"/>
<path d="M640.0,592.4 C646.0,592.7 667.2,592.9 676.0,593.8 C684.8,594.7 687.5,599.1 692.6,598.0 C697.7,596.8 702.3,592.0 706.4,586.9 C710.6,581.8 712.4,570.3 717.5,567.5 C722.6,564.8 730.0,569.6 736.9,570.3 C743.8,571.0 752.1,570.7 759.0,571.7 C766.0,572.6 770.6,574.4 778.4,575.8 C786.3,577.2 798.0,579.5 806.1,580.0 C814.2,580.4 823.4,578.8 826.9,578.6" fill="none" stroke="#9bdbfa" stroke-width="1.6" stroke-linejoin="round" stroke-linecap="round"/>
<path d="M640.0,603.5 C642.3,605.4 644.6,613.7 653.8,614.6 C663.1,615.5 686.6,612.7 695.4,609.0 C704.1,605.4 704.6,595.2 706.4,592.4" fill="none" stroke="#9bdbfa" stroke-width="1.4" stroke-linejoin="round" stroke-linecap="round"/>
<path d="M854.0,490.0 C852.9,492.3 850.1,497.4 847.6,503.8 C845.2,510.3 842.1,523.9 839.3,528.8 C836.6,533.6 836.3,530.1 831.0,532.9 C825.7,535.7 811.4,543.3 807.5,545.4" fill="none" stroke="#9bdbfa" stroke-width="1.4" stroke-linejoin="round" stroke-linecap="round"/>
<path d="M807.5,545.4 C811.9,543.8 826.0,536.4 833.8,535.7 C841.6,535.0 850.6,540.3 854.0,541.2" fill="none" stroke="#9bdbfa" stroke-width="1.4" stroke-linejoin="round" stroke-linecap="round"/>
<path d="M785.9,383.0 C792.1,385.6 815.6,392.8 823.2,399.0 C830.7,405.2 828.5,412.3 831.2,420.3 C833.8,428.3 837.4,438.0 839.2,446.9 C841.0,455.8 841.0,466.0 841.8,473.6 C842.7,481.1 844.9,486.4 844.5,492.2 C844.1,498.0 840.1,505.5 839.2,508.2" fill="none" stroke="#9bdbfa" stroke-width="1.5" stroke-linejoin="round" stroke-linecap="round"/>
<path d="M561.8,593.8 C564.6,594.1 571.0,595.4 578.4,595.2 C585.8,595.0 596.9,593.4 606.1,592.4 C615.3,591.5 629.2,590.1 633.8,589.7" fill="none" stroke="#9bdbfa" stroke-width="1.6" stroke-linejoin="round" stroke-linecap="round"/>
<path d="M448.3,598.0 C453.8,599.6 470.2,604.0 481.5,607.7 C492.8,611.4 509.2,617.6 516.1,620.1 C523.1,622.7 521.9,622.5 523.1,623.0" fill="none" stroke="#9bdbfa" stroke-width="6" stroke-linejoin="round" stroke-linecap="round"/>
<path d="M927.5,380.8 C925.7,383.1 918.3,390.5 916.4,394.7 C914.6,398.8 915.1,400.0 916.4,405.8 C917.8,411.5 922.7,419.6 924.8,429.3 C926.8,439.0 928.2,458.1 928.9,463.9" fill="none" stroke="#9bdbfa" stroke-width="1.3" stroke-linejoin="round" stroke-linecap="round"/>
<path d="M934.4,468.1 C932.4,469.0 926.8,471.3 922.0,473.6 C917.1,475.9 911.6,478.9 905.4,481.9 C899.1,484.9 893.1,489.7 884.6,491.6 C876.1,493.4 859.2,492.7 854.2,493.0" fill="none" stroke="#9bdbfa" stroke-width="1.3" stroke-linejoin="round" stroke-linecap="round"/>
<path d="M615.8,598.8 C622.4,601.5 641.7,613.5 655.7,614.8 C669.8,616.1 692.6,608.1 700.0,606.8" fill="none" stroke="#9bdbfa" stroke-width="1.5" stroke-linejoin="round" stroke-linecap="round"/>
<path d="M690.0,468.2 C696.7,470.0 718.9,478.9 730.0,478.9 C741.1,478.9 748.6,468.0 756.6,468.2 C764.6,468.4 774.4,478.2 777.9,480.2" fill="none" stroke="#f7f7f4" stroke-width="1.3" opacity="0.9"/>
<path d="M815.2,428.3 C821.0,429.6 839.6,433.2 849.8,436.3 C860.0,439.4 864.9,446.9 876.5,446.9 C888.0,446.9 912.0,438.0 919.1,436.3" fill="none" stroke="#f7f7f4" stroke-width="1.3" opacity="0.9"/>
<path d="M849.8,414.9 C851.6,420.3 859.6,436.3 860.5,446.9 C861.4,457.6 854.7,467.3 855.2,478.9 C855.6,490.4 859.6,503.7 863.1,516.2 C866.7,528.6 874.2,547.3 876.5,553.5" fill="none" stroke="#f7f7f4" stroke-width="1.3" opacity="0.9"/>
<path d="M839.2,505.5 C845.4,506.4 862.3,509.1 876.5,510.8 C890.7,512.6 911.1,518.0 924.4,516.2 C937.7,514.4 951.1,502.9 956.4,500.2" fill="none" stroke="#f7f7f4" stroke-width="1.3" opacity="0.9"/>
<path d="M876.5,404.3 C880.9,407.0 896.4,413.2 903.1,420.3 C909.8,427.4 912.0,438.9 916.4,446.9 C920.9,454.9 927.5,464.7 929.7,468.2" fill="none" stroke="#f7f7f4" stroke-width="1.3" opacity="0.9"/>
<path d="M956.4,407.0 C958.6,411.4 965.3,425.6 969.7,433.6 C974.1,441.6 980.8,451.4 983.0,454.9" fill="none" stroke="#f7f7f4" stroke-width="1.3" opacity="0.9"/>
<path d="M1009.7,500.2 C1014.1,504.6 1027.4,520.2 1036.3,526.8 C1045.2,533.5 1058.5,537.9 1062.9,540.1" fill="none" stroke="#f7f7f4" stroke-width="1.3" opacity="0.9"/>
<path d="M972.4,526.8 C976.4,531.3 987.9,549.0 996.3,553.5 C1004.8,557.9 1018.5,553.5 1023.0,553.5" fill="none" stroke="#f7f7f4" stroke-width="1.3" opacity="0.9"/>
<path d="M849.8,540.1 C854.3,537.9 867.6,528.2 876.5,526.8 C885.3,525.5 894.2,527.7 903.1,532.2 C912.0,536.6 925.3,549.9 929.7,553.5" fill="none" stroke="#f7f7f4" stroke-width="1.3" opacity="0.9"/>
<path d="M743.3,526.8 C747.7,525.1 761.0,517.1 769.9,516.2 C778.8,515.3 792.1,520.6 796.6,521.5" fill="none" stroke="#f7f7f4" stroke-width="1.3" opacity="0.9"/>
<path d="M737.9,436.3 C741.1,433.6 751.3,426.5 756.6,420.3 C761.9,414.1 767.7,402.5 769.9,399.0" fill="none" stroke="#f7f7f4" stroke-width="1.3" opacity="0.9"/>
<path d="M1036.3,454.9 C1037.2,460.2 1037.0,480.2 1041.6,486.9 C1046.2,493.5 1060.3,493.5 1064.0,494.9" fill="none" stroke="#f7f7f4" stroke-width="1.3" opacity="0.9"/>
<path d="M589.1,481.6 C593.6,484.7 606.9,499.3 615.8,500.2 C624.7,501.1 638.0,489.1 642.4,486.9" fill="none" stroke="#f7f7f4" stroke-width="1.3" opacity="0.9"/>
<path d="M575.8,540.2 C580.2,538.0 593.6,527.3 602.5,526.9 C611.3,526.4 618.0,535.3 629.1,537.5 C640.2,539.8 662.4,539.8 669.1,540.2" fill="none" stroke="#f7f7f4" stroke-width="1.3" opacity="0.9"/>
<path d="M522.5,553.5 C529.2,551.3 551.4,540.2 562.5,540.2 C573.6,540.2 584.7,551.3 589.1,553.5" fill="none" stroke="#f7f7f4" stroke-width="1.3" opacity="0.9"/>
<path d="M655.7,433.6 C660.2,435.8 675.0,446.9 682.4,446.9 C689.8,446.9 697.0,435.8 700.0,433.6" fill="none" stroke="#f7f7f4" stroke-width="1.3" opacity="0.9"/>
<path d="M669.1,526.9 C671.3,531.3 677.2,551.3 682.4,553.5 C687.5,555.7 697.0,542.4 700.0,540.2" fill="none" stroke="#f7f7f4" stroke-width="1.3" opacity="0.9"/>
<path d="M602.5,596.2 C609.1,597.9 631.3,606.4 642.4,606.8 C653.5,607.3 664.6,600.1 669.1,598.8" fill="none" stroke="#f7f7f4" stroke-width="1.3" opacity="0.9"/>
<path d="M483.3,524.6 C484.3,527.9 485.8,540.3 489.3,544.0 C492.8,547.7 501.7,546.5 504.2,547.0" fill="none" stroke="#f7f7f4" stroke-width="1.3" opacity="0.9"/>
<path d="M548.8,536.5 C552.5,538.3 563.7,545.7 571.1,547.0 C578.6,548.2 589.7,544.5 593.5,544.0" fill="none" stroke="#f7f7f4" stroke-width="1.3" opacity="0.9"/>
<path d="M402.6,612.1 C406.2,609.9 415.0,599.7 423.9,598.8 C432.8,597.9 450.6,605.5 455.9,606.8" fill="none" stroke="#f7f7f4" stroke-width="1.3" opacity="0.9"/>
<path d="M611.8,456.2 C615.3,455.1 628.8,448.2 632.5,449.8 C636.3,451.4 633.6,458.8 634.1,465.7 C634.7,472.6 632.3,487.5 635.7,491.2 C639.2,494.9 650.1,490.1 654.8,488.0 C659.6,485.9 660.7,483.5 664.4,478.5 C668.1,473.4 675.0,461.2 677.1,457.8" fill="none" stroke="#8a88dd" stroke-width="1.1" stroke-dasharray="3,2"/>
<path d="M701.0,465.7 C702.3,469.4 705.8,482.7 709.0,488.0 C712.2,493.3 718.3,492.2 720.1,497.6 C722.0,502.9 720.1,516.3 720.1,520.0" fill="none" stroke="#8a88dd" stroke-width="1.1" stroke-dasharray="3,2"/>
<path d="M716.1,490.0 C717.3,491.8 723.1,496.5 723.1,501.1 C723.1,505.7 715.0,516.1 716.1,517.7 C717.3,519.3 727.4,509.4 730.0,510.8 C732.5,512.1 730.2,521.4 731.4,526.0 C732.5,530.6 735.1,534.8 736.9,538.4 C738.7,542.1 741.5,546.5 742.4,548.1" fill="none" stroke="#8a88dd" stroke-width="1.1" stroke-dasharray="3,2"/>
<path d="M660.8,552.3 C659.6,554.8 655.9,563.6 653.8,567.5 C651.8,571.4 650.6,574.0 648.3,575.8 C646.0,577.7 641.4,578.1 640.0,578.6" fill="none" stroke="#8a88dd" stroke-width="1.1" stroke-dasharray="3,2"/>
<path d="M699.5,598.0 C703.4,596.8 714.5,590.6 723.1,591.1 C731.6,591.5 743.8,597.3 750.7,600.7 C757.7,604.2 757.7,609.7 764.6,611.8 C771.5,613.9 785.8,612.3 792.3,613.2 C798.7,614.1 801.5,616.7 803.3,617.4" fill="none" stroke="#8a88dd" stroke-width="1.1" stroke-dasharray="3,2"/>
<path d="M785.9,383.0 C788.6,385.6 795.2,395.0 801.9,399.0 C808.5,403.0 820.5,401.2 825.9,407.0 C831.2,412.7 833.8,426.9 833.8,433.6 C833.8,440.3 825.4,442.0 825.9,446.9 C826.3,451.8 832.5,458.9 836.5,462.9 C840.5,466.9 842.3,469.6 849.8,470.9 C857.4,472.2 876.5,470.9 881.8,470.9" fill="none" stroke="#8a88dd" stroke-width="1.1" stroke-dasharray="3,2"/>
<path d="M850.0,472.2 C855.8,471.5 876.5,465.5 884.6,468.1 C892.7,470.6 892.7,484.2 898.4,487.4 C904.2,490.7 913.4,486.7 919.2,487.4 C925.0,488.1 930.3,489.5 933.1,491.6 C935.8,493.7 935.4,498.6 935.8,500.0" fill="none" stroke="#8a88dd" stroke-width="1.1" stroke-dasharray="3,2"/>
<path d="M1006.4,469.4 C1009.4,468.1 1016.3,463.4 1024.4,461.1 C1032.5,458.8 1048.3,457.4 1054.9,455.6 C1061.5,453.7 1062.5,451.0 1064.0,450.1" fill="none" stroke="#8a88dd" stroke-width="1.1" stroke-dasharray="3,2"/>
<path d="M700.7,468.2 C703.3,472.7 711.8,488.6 716.6,494.9 C721.5,501.1 727.3,500.2 730.0,505.5 C732.6,510.8 732.2,523.3 732.6,526.8" fill="none" stroke="#8a88dd" stroke-width="1.1" stroke-dasharray="3,2"/>
<path d="M536.7,443.1 C539.7,443.8 552.4,443.8 554.7,447.2 C557.0,450.7 551.5,459.0 550.6,463.8 C549.6,468.7 544.3,474.7 549.2,476.3 C554.0,477.9 572.0,474.2 579.6,473.5 C587.2,472.8 588.6,474.7 594.8,472.1 C601.1,469.6 610.7,461.8 617.0,458.3 C623.2,454.9 629.0,451.9 632.2,451.4 C635.4,450.9 635.2,449.8 636.3,455.5 C637.5,461.3 635.2,480.7 639.1,486.0 C643.0,491.3 656.5,487.1 660.0,487.4" fill="none" stroke="#8a88dd" stroke-width="1.1" stroke-dasharray="3,2"/>
<path d="M579.6,473.5 C579.8,474.2 578.7,477.2 581.0,477.7 C583.3,478.1 590.7,475.1 593.4,476.3 C596.2,477.5 595.1,482.1 597.6,484.6 C600.1,487.1 606.8,490.4 608.7,491.5" fill="none" stroke="#8a88dd" stroke-width="1.1" stroke-dasharray="3,2"/>
<path d="M602.5,540.2 C605.1,544.6 614.0,558.0 618.4,566.8 C622.9,575.7 629.5,584.1 629.1,593.5 C628.7,602.9 618.0,618.1 615.8,623.1" fill="none" stroke="#8a88dd" stroke-width="1.1" stroke-dasharray="3,2"/>
<path d="M945.5,367.0 L949.7,373.2 L935.8,376.7 L938.6,394.7 L952.4,403.7 L967.7,404.4 L981.5,411.3 L988.4,406.5 L992.6,405.8 L1000.2,421.0 L1006.4,425.1 L1007.1,433.4 L1000.9,450.1 L999.5,458.4 L1002.3,466.7 L1006.4,469.4 L999.5,473.6 L989.8,476.4 L985.7,484.7 L976.0,490.0 L967.7,505.2 L949.7,505.9 L946.9,517.7 L937.2,519.8 L936.5,528.8 L941.4,529.5 L960.7,542.6 L962.1,550.9 L956.6,553.7 L955.2,562.0 L944.1,571.7 L935.8,565.4 L916.4,573.1 L902.6,580.0 L897.1,584.1 L890.1,580.0 L882.5,578.6 L884.6,589.7 L877.7,588.3 L874.9,585.5 L862.5,578.6 L850.0,580.0 L839.2,569.5 L831.2,572.1 L839.2,585.4 L823.2,582.8 L801.9,590.8 L804.5,612.1 L809.9,623.0" fill="none" stroke="#7272dc" stroke-width="1.6" stroke-linejoin="round"/>
<path d="M525.8,495.5 L531.4,501.1" fill="none" stroke="#efcb3e" stroke-width="1.5" stroke-linecap="round" stroke-linejoin="round"/>
<path d="M541.1,499.7 C544.5,500.4 556.0,502.0 561.8,503.8 C567.6,505.7 572.2,508.0 575.7,510.8 C579.1,513.5 581.4,518.8 582.6,520.5" fill="none" stroke="#efcb3e" stroke-width="1.5" stroke-linecap="round" stroke-linejoin="round"/>
<path d="M488.4,550.9 L492.6,559.2" fill="none" stroke="#efcb3e" stroke-width="1.5" stroke-linecap="round" stroke-linejoin="round"/>
<path d="M441.4,557.8 C443.2,558.3 448.5,560.4 452.5,560.6 C456.4,560.8 462.8,559.4 464.9,559.2" fill="none" stroke="#efcb3e" stroke-width="1.5" stroke-linecap="round" stroke-linejoin="round"/>
<path d="M451.1,555.1 L453.8,560.6" fill="none" stroke="#efcb3e" stroke-width="1.5" stroke-linecap="round" stroke-linejoin="round"/>
<path d="M481.5,574.4 L484.3,570.3" fill="none" stroke="#efcb3e" stroke-width="1.5" stroke-linecap="round" stroke-linejoin="round"/>
<path d="M448.3,598.0 C450.6,596.1 458.9,589.2 462.1,586.9 C465.4,584.6 466.8,584.6 467.7,584.1" fill="none" stroke="#efcb3e" stroke-width="1.5" stroke-linecap="round" stroke-linejoin="round"/>
<path d="M536.9,575.8 L541.1,580.0" fill="none" stroke="#efcb3e" stroke-width="1.5" stroke-linecap="round" stroke-linejoin="round"/>
<path d="M532.7,567.5 L534.1,571.7" fill="none" stroke="#efcb3e" stroke-width="1.5" stroke-linecap="round" stroke-linejoin="round"/>
<path d="M546.6,566.1 L550.7,563.4" fill="none" stroke="#efcb3e" stroke-width="1.5" stroke-linecap="round" stroke-linejoin="round"/>
<path d="M567.4,603.5 L575.7,598.0" fill="none" stroke="#efcb3e" stroke-width="1.5" stroke-linecap="round" stroke-linejoin="round"/>
<path d="M761.8,380.8 C761.6,382.7 761.6,388.0 760.4,391.9 C759.3,395.8 758.8,399.5 754.9,404.4 C751.0,409.2 742.2,415.9 736.9,421.0 C731.6,426.1 727.7,430.9 723.1,434.8 C718.4,438.8 714.3,442.2 709.2,444.5 C704.1,446.8 700.7,449.1 692.6,448.7 C684.5,448.2 666.1,444.8 660.8,441.8 C655.5,438.8 659.6,433.4 660.8,430.7 C661.9,427.9 665.4,426.1 667.7,425.1 C670.0,424.2 673.5,425.1 674.6,425.1" fill="none" stroke="#efcb3e" stroke-width="1.5" stroke-linecap="round" stroke-linejoin="round"/>
<path d="M739.7,376.7 C742.2,376.7 751.0,376.0 754.9,376.7 C758.8,377.4 761.8,380.2 763.2,380.8" fill="none" stroke="#efcb3e" stroke-width="1.5" stroke-linecap="round" stroke-linejoin="round"/>
<path d="M720.3,398.8 C723.1,402.3 733.7,414.3 736.9,419.6 C740.1,424.9 739.2,428.8 739.7,430.7" fill="none" stroke="#efcb3e" stroke-width="1.5" stroke-linecap="round" stroke-linejoin="round"/>
<path d="M707.8,444.5 L714.8,462.5" fill="none" stroke="#efcb3e" stroke-width="1.5" stroke-linecap="round" stroke-linejoin="round"/>
<path d="M838.0,393.3 L844.9,398.8" fill="none" stroke="#efcb3e" stroke-width="1.5" stroke-linecap="round" stroke-linejoin="round"/>
<path d="M887.4,367.0 C887.4,368.4 883.9,373.9 887.4,375.3 C890.8,376.7 901.9,376.7 908.1,375.3 C914.4,373.9 922.0,368.4 924.8,367.0" fill="none" stroke="#efcb3e" stroke-width="1.5" stroke-linecap="round" stroke-linejoin="round"/>
<path d="M908.1,375.3 C909.3,378.1 912.2,387.5 915.1,391.9 C917.9,396.3 923.4,396.5 925.4,401.6 C927.5,406.7 928.1,417.3 927.5,422.4 C926.9,427.4 923.4,429.3 922.0,432.1 C920.6,434.8 919.7,437.8 919.2,439.0" fill="none" stroke="#efcb3e" stroke-width="1.5" stroke-linecap="round" stroke-linejoin="round"/>
<path d="M967.7,476.4 C966.5,477.0 962.1,478.7 960.7,480.5 C959.4,482.4 961.7,486.0 959.4,487.4 C957.1,488.8 951.1,486.7 946.9,488.8 C942.7,490.9 936.5,498.2 934.4,500.0" fill="none" stroke="#efcb3e" stroke-width="1.5" stroke-linecap="round" stroke-linejoin="round"/>
<path d="M971.8,480.5 C974.6,481.0 978.7,482.6 988.4,483.3 C998.1,484.0 1020.7,483.5 1030.0,484.7 C1039.2,485.8 1038.7,487.9 1043.8,490.2 C1048.9,492.5 1057.6,497.1 1060.4,498.5" fill="none" stroke="#efcb3e" stroke-width="1.5" stroke-linecap="round" stroke-linejoin="round"/>
<path d="M883.2,383.6 L887.4,375.3" fill="none" stroke="#efcb3e" stroke-width="1.5" stroke-linecap="round" stroke-linejoin="round"/>
<path d="M883.2,468.1 C882.9,469.4 881.8,474.1 881.1,476.4 C880.5,478.7 879.4,481.0 879.1,481.9" fill="none" stroke="#efcb3e" stroke-width="1.5" stroke-linecap="round" stroke-linejoin="round"/>
<path d="M905.4,595.9 C908.1,595.3 914.1,592.9 922.0,592.4 C929.8,592.0 944.6,593.4 952.4,593.1 C960.3,592.9 966.3,591.4 969.0,591.1" fill="none" stroke="#efcb3e" stroke-width="1.5" stroke-linecap="round" stroke-linejoin="round"/>
<path d="M673.2,556.4 L685.7,559.2" fill="none" stroke="#efcb3e" stroke-width="1.5" stroke-linecap="round" stroke-linejoin="round"/>
<path d="M735.5,580.0 C738.5,579.7 749.6,578.1 753.5,578.6 C757.4,579.1 758.1,582.1 759.0,582.7" fill="none" stroke="#efcb3e" stroke-width="1.5" stroke-linecap="round" stroke-linejoin="round"/>
<path d="M792.3,552.3 L806.1,548.1" fill="none" stroke="#efcb3e" stroke-width="1.5" stroke-linecap="round" stroke-linejoin="round"/>
<path d="M786.7,570.3 L795.0,570.3" fill="none" stroke="#efcb3e" stroke-width="1.5" stroke-linecap="round" stroke-linejoin="round"/>
<path d="M764.6,592.4 L770.1,593.1" fill="none" stroke="#efcb3e" stroke-width="1.5" stroke-linecap="round" stroke-linejoin="round"/>
<path d="M988.4,584.1 L1006.4,584.1" fill="none" stroke="#efcb3e" stroke-width="1.5" stroke-linecap="round" stroke-linejoin="round"/>
<path d="M940.0,490.0 C938.8,491.8 935.6,497.8 933.1,501.1 C930.5,504.3 925.9,505.0 924.8,509.4 C923.6,513.8 925.9,524.4 926.1,527.4" fill="none" stroke="#efcb3e" stroke-width="1.5" stroke-linecap="round" stroke-linejoin="round"/>
<path d="M1034.1,581.4 L1050.7,588.3" fill="none" stroke="#efcb3e" stroke-width="1.5" stroke-linecap="round" stroke-linejoin="round"/>
<path d="M1041.0,490.0 C1043.8,490.7 1053.8,491.4 1057.6,494.2 C1061.5,496.9 1062.9,504.5 1064.0,506.6" fill="none" stroke="#efcb3e" stroke-width="1.5" stroke-linecap="round" stroke-linejoin="round"/>
<path d="M916.4,596.6 L917.8,614.6" fill="none" stroke="#efcb3e" stroke-width="1.5" stroke-linecap="round" stroke-linejoin="round"/>
<path d="M790.9,378.1 C792.0,379.9 793.7,386.1 797.8,389.1 C802.0,392.1 812.8,394.9 815.8,396.1" fill="none" stroke="#efcb3e" stroke-width="1.5" stroke-linecap="round" stroke-linejoin="round"/>
<path d="M575.5,430.6 L563.0,450.0" fill="none" stroke="#efcb3e" stroke-width="1.5" stroke-linecap="round" stroke-linejoin="round"/>
<path d="M567.2,441.7 C569.0,443.6 575.9,450.0 578.2,452.8 C580.5,455.5 578.9,457.4 581.0,458.3 C583.1,459.2 587.2,456.9 590.7,458.3 C594.1,459.7 599.9,465.2 601.7,466.6" fill="none" stroke="#efcb3e" stroke-width="1.5" stroke-linecap="round" stroke-linejoin="round"/>
<path d="M524.3,477.7 L529.8,474.9" fill="none" stroke="#efcb3e" stroke-width="1.5" stroke-linecap="round" stroke-linejoin="round"/>
<path d="M522.9,486.0 L529.8,494.3" fill="none" stroke="#efcb3e" stroke-width="1.5" stroke-linecap="round" stroke-linejoin="round"/>
<path d="M587.9,394.7 L589.3,400.2" fill="none" stroke="#efcb3e" stroke-width="1.5" stroke-linecap="round" stroke-linejoin="round"/>
<path d="M615.6,437.6 L622.5,448.6" fill="none" stroke="#efcb3e" stroke-width="1.5" stroke-linecap="round" stroke-linejoin="round"/>
<path d="M503.8,516.2 C507.2,513.5 520.2,504.1 524.3,500.0 C528.4,495.8 526.8,494.5 528.4,491.5 C530.0,488.5 531.2,484.6 534.0,481.8 C536.7,479.1 540.4,476.1 545.0,474.9 C549.6,473.8 557.5,476.3 561.6,474.9 C565.8,473.5 566.9,469.8 569.9,466.6 C572.9,463.4 577.1,459.2 579.6,455.5 C582.1,451.9 584.2,446.3 585.1,444.5" fill="none" stroke="#f4a257" stroke-width="1.7" stroke-linecap="round" stroke-linejoin="round"/>
<path d="M509.2,519.1 C511.5,520.2 517.1,523.9 523.1,526.0 C529.1,528.1 538.3,530.1 545.2,531.5 C552.1,532.9 559.0,535.5 564.6,534.3 C570.1,533.1 575.4,526.9 578.4,524.6 C581.4,522.3 578.0,521.4 582.6,520.5 C587.2,519.5 599.9,519.5 606.1,519.1 C612.3,518.6 614.2,517.7 620.0,517.7 C625.7,517.7 635.5,519.7 640.7,519.1 C646.0,518.5 649.7,514.9 651.4,514.1" fill="none" stroke="#f4a257" stroke-width="1.7" stroke-linecap="round" stroke-linejoin="round"/>
<path d="M651.4,514.1 C655.0,512.3 669.3,510.4 672.9,503.0 C676.5,495.5 671.8,474.3 673.2,469.4 C674.7,464.5 680.1,472.9 681.5,473.6" fill="none" stroke="#f4a257" stroke-width="1.7" stroke-linecap="round" stroke-linejoin="round"/>
<path d="M854.0,469.4 C859.6,468.4 878.8,465.5 887.3,463.4 C895.9,461.3 896.8,459.4 905.4,457.0 C913.9,454.5 931.7,448.9 938.6,448.7 C945.5,448.4 942.7,454.0 946.9,455.6 C951.1,457.2 959.4,458.7 963.5,458.4 C967.7,458.0 968.8,454.2 971.8,453.5 C974.8,452.8 976.9,455.2 981.5,454.2 C986.1,453.2 994.9,449.4 999.5,447.3 C1004.1,445.2 1005.0,443.1 1009.2,441.8 C1013.3,440.4 1015.3,439.4 1024.4,439.0 C1033.6,438.5 1057.4,439.0 1064.0,439.0" fill="none" stroke="#f4a257" stroke-width="1.7" stroke-linecap="round" stroke-linejoin="round"/>
<path d="M917.8,437.6 C919.0,438.5 921.3,441.3 924.8,443.1 C928.2,445.0 936.3,447.7 938.6,448.7" fill="none" stroke="#f4a257" stroke-width="1.7" stroke-linecap="round" stroke-linejoin="round"/>
<path d="M946.9,455.6 C947.4,458.1 947.4,466.7 949.7,470.8 C952.0,475.0 956.6,479.0 960.7,480.5 C964.9,482.0 972.3,479.9 974.6,479.8" fill="none" stroke="#f4a257" stroke-width="1.7" stroke-linecap="round" stroke-linejoin="round"/>
<path d="M651.4,514.1 C652.3,515.6 649.3,521.9 656.6,523.2 C663.9,524.5 683.1,521.1 695.4,521.8 C707.6,522.5 722.1,525.3 730.0,527.4 C737.8,529.5 738.3,532.7 742.4,534.3 C746.6,535.9 748.9,537.1 754.9,537.1 C760.9,537.1 771.5,534.6 778.4,534.3 C785.3,534.0 791.8,533.1 796.4,535.0 C801.0,536.8 802.2,542.0 806.1,545.4 C810.0,548.7 814.9,551.6 820.0,555.1 C825.0,558.5 830.9,562.2 836.6,566.1 C842.2,570.1 847.2,574.7 854.0,578.6 C860.9,582.5 870.3,586.4 877.7,589.7 C885.1,592.9 891.5,594.3 898.4,598.0 C905.4,601.7 914.8,607.6 919.2,611.8 C923.6,616.0 923.8,621.2 924.8,623.0" fill="none" stroke="#f4a257" stroke-width="1.7" stroke-linecap="round" stroke-linejoin="round"/>
<path d="M731.4,490.0 C731.6,492.3 730.9,498.1 732.7,503.8 C734.6,509.6 740.8,519.5 742.4,524.6 C744.1,529.7 742.4,532.7 742.4,534.3" fill="none" stroke="#f4a257" stroke-width="1.7" stroke-linecap="round" stroke-linejoin="round"/>
<path d="M778.4,534.3 C777.3,535.7 773.1,539.1 771.5,542.6 C769.9,546.1 769.0,550.9 768.7,555.1 C768.5,559.2 769.4,564.5 770.1,567.5 C770.8,570.5 772.4,572.1 772.9,573.1" fill="none" stroke="#f4a257" stroke-width="1.7" stroke-linecap="round" stroke-linejoin="round"/>
<path d="M772.9,586.9 C771.5,585.5 767.1,579.1 764.6,578.6 C762.0,578.1 760.0,580.4 757.7,584.1 C755.4,587.8 754.2,595.2 750.7,600.7 C747.3,606.3 739.7,613.6 736.9,617.4 C734.1,621.1 734.6,622.1 734.1,623.0" fill="none" stroke="#f4a257" stroke-width="1.7" stroke-linecap="round" stroke-linejoin="round"/>
<path d="M754.9,595.2 L768.7,592.4" fill="none" stroke="#f4a257" stroke-width="1.7" stroke-linecap="round" stroke-linejoin="round"/>
<path d="M771.5,586.9 C772.9,589.9 777.3,598.9 779.8,604.9 C782.3,610.9 785.6,620.0 786.7,623.0" fill="none" stroke="#f4a257" stroke-width="1.7" stroke-linecap="round" stroke-linejoin="round"/>
<path d="M831.0,532.9 L807.5,545.4" fill="none" stroke="#f4a257" stroke-width="1.7" stroke-linecap="round" stroke-linejoin="round"/>
<path d="M612.8,441.7 C613.7,444.0 616.0,449.5 618.4,455.5 C620.7,461.5 624.8,470.3 626.7,477.7 C628.5,485.1 628.4,494.5 629.4,500.0 C630.4,505.4 628.9,508.0 632.5,510.3 C636.2,512.7 648.3,513.5 651.4,514.1" fill="none" stroke="#f4a257" stroke-width="1.7" stroke-linecap="round" stroke-linejoin="round"/>
<path d="M585.1,444.5 C586.3,444.2 588.8,442.2 592.1,443.1 C595.3,444.0 600.1,447.9 604.5,450.0 C608.9,452.1 616.0,454.6 618.4,455.5" fill="none" stroke="#f4a257" stroke-width="1.7" stroke-linecap="round" stroke-linejoin="round"/>
<path d="M658.0,500.0 C660.5,494.9 669.3,476.8 673.2,469.4 C677.1,462.0 678.3,460.0 681.5,455.6 C684.8,451.2 691.0,446.8 692.6,443.1 C694.2,439.4 692.4,435.8 691.2,433.4 C690.1,431.1 686.6,430.0 685.7,429.3" fill="none" stroke="#f4a257" stroke-width="1.7" stroke-linecap="round" stroke-linejoin="round"/>
<path d="M731.4,488.8 L731.4,500.0" fill="none" stroke="#f4a257" stroke-width="1.7" stroke-linecap="round" stroke-linejoin="round"/>
<path d="M623.9,438.9 C625.3,439.6 627.8,441.7 632.2,443.1 C636.6,444.5 648.9,447.0 650.2,447.2 C651.5,447.5 638.2,444.1 640.0,444.5 C641.8,445.0 655.5,445.9 660.8,450.1 C666.1,454.2 668.4,465.5 671.8,469.4 C675.3,473.4 675.5,470.6 681.5,473.6 C687.5,476.6 701.8,484.4 707.8,487.4 C713.8,490.4 710.4,491.6 717.5,491.6 C724.7,491.6 740.6,489.3 750.7,487.4 C760.9,485.6 769.2,480.3 778.4,480.5 C787.7,480.7 793.5,490.7 806.1,488.8 C818.7,487.0 846.0,472.7 854.0,469.4" fill="none" stroke="#f4a257" stroke-width="1.7" stroke-linecap="round" stroke-linejoin="round"/>
<path d="M640.0,444.5 C641.8,445.0 646.5,448.2 651.1,447.3 C655.7,446.4 661.9,442.7 667.7,439.0 C673.5,435.3 679.9,429.3 685.7,425.1 C691.4,421.0 696.1,418.9 702.3,414.1 C708.5,409.2 718.9,400.7 723.1,396.1 C727.2,391.5 726.3,391.2 727.2,386.4 C728.1,381.5 728.4,370.2 728.6,367.0" fill="none" stroke="#f4a257" stroke-width="1.7" stroke-linecap="round" stroke-linejoin="round"/>
<path d="M707.8,488.8 C708.5,486.0 709.4,476.4 712.0,472.2 C714.5,468.1 719.4,468.5 723.1,463.9 C726.7,459.3 730.4,448.2 734.1,444.5 C737.8,440.8 741.1,442.9 745.2,441.8 C749.4,440.6 753.5,439.9 759.0,437.6 C764.6,435.3 771.7,432.1 778.4,427.9 C785.1,423.8 793.2,418.2 799.2,412.7 C805.2,407.1 809.6,398.6 814.4,394.7 C819.3,390.8 821.7,391.5 828.3,389.1 C834.9,386.8 849.7,382.2 854.0,380.8" fill="none" stroke="#f4a257" stroke-width="1.7" stroke-linecap="round" stroke-linejoin="round"/>
<path d="M817.2,396.1 C816.7,398.6 814.6,405.8 814.4,411.3 C814.2,416.8 816.0,422.8 815.8,429.3 C815.6,435.8 813.3,442.0 813.0,450.1 C812.8,458.1 813.7,469.4 814.4,477.7 C815.1,486.1 818.6,496.1 817.2,500.0 C815.8,503.9 808.7,498.8 806.1,501.1 C803.6,503.3 803.3,508.0 802.0,513.5 C800.6,519.1 799.7,527.6 797.8,534.3 C796.0,541.0 792.7,547.7 790.9,553.7 C789.0,559.7 787.7,566.1 786.7,570.3 C785.8,574.4 785.6,577.2 785.3,578.6" fill="none" stroke="#f4a257" stroke-width="1.7" stroke-linecap="round" stroke-linejoin="round"/>
<path d="M1025.8,462.5 C1024.2,465.1 1018.4,471.5 1016.1,477.7 C1013.8,484.0 1014.3,486.5 1012.0,500.0 C1009.7,513.6 1006.2,541.0 1002.3,559.2 C998.3,577.4 991.7,598.4 988.4,609.0 C985.2,619.7 983.8,620.7 982.9,623.0" fill="none" stroke="#f4a257" stroke-width="1.7" stroke-linecap="round" stroke-linejoin="round"/>
<path d="M1064.0,570.3 C1060.6,572.6 1050.2,579.1 1043.8,584.1 C1037.4,589.2 1029.5,594.3 1025.8,600.7 C1022.1,607.2 1022.3,619.3 1021.7,623.0" fill="none" stroke="#f4a257" stroke-width="1.7" stroke-linecap="round" stroke-linejoin="round"/>
<path d="M499.5,581.4 C502.5,580.9 511.3,578.8 517.5,578.6 C523.7,578.4 531.4,580.0 536.9,580.0 C542.4,580.0 546.1,577.9 550.7,578.6 C555.4,579.3 558.8,582.1 564.6,584.1 C570.4,586.2 578.4,589.7 585.3,591.1 C592.3,592.4 600.3,593.1 606.1,592.4 C611.9,591.7 614.3,587.6 620.0,586.9 C625.6,586.2 631.4,588.7 640.0,588.3 C648.6,587.8 663.8,585.5 671.8,584.1 C679.9,582.7 683.1,582.3 688.4,580.0 C693.8,577.7 697.9,573.1 703.7,570.3 C709.4,567.5 712.4,564.1 723.1,563.4 C733.7,562.7 759.0,564.5 767.4,566.1 C775.7,567.8 768.3,572.4 772.9,573.1 C777.5,573.7 791.3,570.7 795.0,570.3" fill="none" stroke="#f4a257" stroke-width="1.7" stroke-linecap="round" stroke-linejoin="round"/>
<path d="M836.6,566.1 C838.0,565.0 842.6,560.7 844.9,559.2 C847.1,557.7 845.5,557.7 850.0,557.1 C854.5,556.6 865.2,555.9 872.1,555.8 C879.1,555.6 888.3,556.3 891.5,556.4" fill="none" stroke="#f4a257" stroke-width="1.7" stroke-linecap="round" stroke-linejoin="round"/>
<path d="M545.2,557.8 C545.7,560.1 546.4,568.0 548.0,571.7 C549.6,575.4 552.1,576.1 554.9,580.0 C557.7,583.9 563.0,588.0 564.6,595.2 C566.2,602.4 564.6,618.4 564.6,623.0" fill="none" stroke="#f4a257" stroke-width="1.7" stroke-linecap="round" stroke-linejoin="round"/>
<path d="M541.1,580.0 C540.8,581.6 541.5,585.7 539.7,589.7 C537.8,593.6 532.7,598.0 530.0,603.5 C527.2,609.1 524.2,619.8 523.1,623.0" fill="none" stroke="#f4a257" stroke-width="1.7" stroke-linecap="round" stroke-linejoin="round"/>
<path d="M495.4,570.3 C495.4,571.7 494.7,576.7 495.4,578.6 C496.1,580.4 498.8,580.9 499.5,581.4" fill="none" stroke="#f4a257" stroke-width="1.7" stroke-linecap="round" stroke-linejoin="round"/>
<path d="M545.2,557.8 C548.7,554.1 560.4,541.2 566.0,535.7 C571.5,530.1 576.4,526.5 578.4,524.6" fill="none" stroke="#f4a257" stroke-width="1.7" stroke-linecap="round" stroke-linejoin="round"/>
<path d="M467.7,559.2 C470.0,560.6 476.9,565.7 481.5,567.5 C486.1,569.4 492.1,570.5 495.4,570.3 C498.6,570.1 497.7,567.5 500.9,566.1 C504.1,564.8 510.6,562.7 514.8,562.0 C518.9,561.3 522.1,562.7 525.8,562.0 C529.5,561.3 533.7,558.5 536.9,557.8 C540.1,557.1 543.8,557.8 545.2,557.8" fill="none" stroke="#f4a257" stroke-width="1.7" stroke-linecap="round" stroke-linejoin="round"/>
<path d="M440.0,555.1 C442.3,555.3 449.2,555.8 453.8,556.4 C458.5,557.1 465.4,558.8 467.7,559.2" fill="none" stroke="#f4a257" stroke-width="1.7" stroke-linecap="round" stroke-linejoin="round"/>
<path d="M510.6,523.2 C511.8,526.5 515.0,537.1 517.5,542.6 C520.1,548.1 522.6,553.9 525.8,556.4 C529.1,559.0 535.1,557.6 536.9,557.8" fill="none" stroke="#f4a257" stroke-width="1.7" stroke-linecap="round" stroke-linejoin="round"/>
<path d="M509.2,523.2 C508.4,525.5 504.6,532.7 504.4,537.1 C504.1,541.4 506.1,545.4 507.8,549.5 C509.6,553.7 513.1,557.6 514.8,562.0 C516.4,566.4 516.1,572.6 517.5,575.8 C518.9,579.1 522.1,580.4 523.1,581.4" fill="none" stroke="#f4a257" stroke-width="1.7" stroke-linecap="round" stroke-linejoin="round"/>
<path d="M576.8,419.6 C577.8,422.1 581.7,428.8 582.4,434.8 C583.1,440.8 581.2,452.1 581.0,455.5" fill="none" stroke="#f4a257" stroke-width="1.7" stroke-linecap="round" stroke-linejoin="round"/>
<path d="M592.1,425.1 L601.7,423.7" fill="none" stroke="#f4a257" stroke-width="1.7" stroke-linecap="round" stroke-linejoin="round"/>
<path d="M626.7,367.0 C625.3,370.5 622.5,382.4 618.4,387.8 C614.2,393.1 606.8,396.7 601.7,398.8 C596.7,400.9 590.2,400.0 587.9,400.2" fill="none" stroke="#f4a257" stroke-width="1.7" stroke-linecap="round" stroke-linejoin="round"/>
<path d="M601.7,398.8 L604.5,412.7" fill="none" stroke="#f4a257" stroke-width="1.7" stroke-linecap="round" stroke-linejoin="round"/>
<path d="M565.8,397.4 L571.3,396.1" fill="none" stroke="#f4a257" stroke-width="1.7" stroke-linecap="round" stroke-linejoin="round"/>
<path d="M561.6,474.9 C560.0,477.2 555.4,484.6 551.9,488.7 C548.5,492.9 542.7,498.1 540.9,500.0" fill="none" stroke="#f4a257" stroke-width="1.7" stroke-linecap="round" stroke-linejoin="round"/>
<path d="M578.2,367.0 C578.0,370.5 578.5,382.7 576.8,387.8 C575.2,392.8 570.2,394.4 568.5,397.4 C566.9,400.4 566.9,403.2 567.2,405.7 C567.4,408.3 569.5,411.5 569.9,412.7" fill="none" stroke="#f4a257" stroke-width="1.7" stroke-linecap="round" stroke-linejoin="round"/>
<path d="M653.8,523.2 C652.9,527.4 647.2,541.0 648.3,548.1 C649.5,555.3 656.4,559.2 660.8,566.1 C665.1,573.1 671.6,582.7 674.6,589.7 C677.6,596.6 676.9,602.1 678.8,607.7 C680.6,613.2 684.5,620.5 685.7,623.0" fill="none" stroke="#f4a257" stroke-width="1.7" stroke-linecap="round" stroke-linejoin="round"/>
<path d="M648.3,548.1 L640.0,555.1" fill="none" stroke="#f4a257" stroke-width="1.7" stroke-linecap="round" stroke-linejoin="round"/>
<path d="M651.4,514.1 C648.8,521.3 639.8,543.3 635.8,557.4 C631.8,571.5 629.6,587.7 627.5,598.7 C625.5,609.7 624.1,619.3 623.4,623.4" fill="none" stroke="#f4a257" stroke-width="1.7" stroke-linecap="round" stroke-linejoin="round"/>
<path d="M601.7,440.3 C601.2,436.6 599.7,426.7 601.1,422.3 C602.4,418.0 606.9,414.5 610.0,414.0 C613.2,413.6 617.3,417.0 619.7,419.6 C622.2,422.1 623.9,426.3 624.6,429.3 C625.3,432.3 625.2,435.0 623.9,437.6 C622.6,440.1 620.2,443.3 617.0,444.5 C613.7,445.6 607.1,445.2 604.5,444.5 C602.0,443.8 602.3,444.0 601.7,440.3 Z" fill="none" stroke="#f4a257" stroke-width="1.6"/>
<text x="618" y="424.3" font-size="15.782122905027949" font-weight="400" textLength="84.0" lengthAdjust="spacingAndGlyphs" fill="#fff" stroke="#fff" stroke-width="2.4" stroke-opacity="0.85" stroke-linejoin="round">Amsterdam</text>
<text x="618" y="424.3" font-size="15.782122905027949" font-weight="400" textLength="84.0" lengthAdjust="spacingAndGlyphs" fill="#202020" stroke="#202020" stroke-width="0.35">Amsterdam</text>
<text x="536.4" y="419" font-size="14.944134078212276" font-weight="400" textLength="54.9" lengthAdjust="spacingAndGlyphs" fill="#fff" stroke="#fff" stroke-width="2.4" stroke-opacity="0.85" stroke-linejoin="round">Haarlem</text>
<text x="536.4" y="419" font-size="14.944134078212276" font-weight="400" textLength="54.9" lengthAdjust="spacingAndGlyphs" fill="#202020" stroke="#202020" stroke-width="0.35">Haarlem</text>
<text x="471.4" y="510" font-size="13.826815642458069" font-weight="400" textLength="66.2" lengthAdjust="spacingAndGlyphs" fill="#fff" stroke="#fff" stroke-width="2.4" stroke-opacity="0.85" stroke-linejoin="round">The Hague</text>
<text x="471.4" y="510" font-size="13.826815642458069" font-weight="400" textLength="66.2" lengthAdjust="spacingAndGlyphs" fill="#202020" stroke="#202020" stroke-width="0.35">The Hague</text>
<text x="627.8" y="507.3" font-size="14.664804469273744" font-weight="400" textLength="47.7" lengthAdjust="spacingAndGlyphs" fill="#fff" stroke="#fff" stroke-width="2.4" stroke-opacity="0.85" stroke-linejoin="round">Utrecht</text>
<text x="627.8" y="507.3" font-size="14.664804469273744" font-weight="400" textLength="47.7" lengthAdjust="spacingAndGlyphs" fill="#202020" stroke="#202020" stroke-width="0.35">Utrecht</text>
<text x="501.2" y="556.2" font-size="13.966480446927374" font-weight="400" textLength="67.0" lengthAdjust="spacingAndGlyphs" fill="#fff" stroke="#fff" stroke-width="2.4" stroke-opacity="0.85" stroke-linejoin="round">Rotterdam</text>
<text x="501.2" y="556.2" font-size="13.966480446927374" font-weight="400" textLength="67.0" lengthAdjust="spacingAndGlyphs" fill="#202020" stroke="#202020" stroke-width="0.35">Rotterdam</text>
<text x="695.3" y="555" font-size="17.03910614525146" font-weight="400" textLength="92.7" lengthAdjust="spacingAndGlyphs" fill="#fff" stroke="#fff" stroke-width="2.6" stroke-opacity="0.85" stroke-linejoin="round">Netherlands</text>
<text x="695.3" y="555" font-size="17.03910614525146" font-weight="400" textLength="92.7" lengthAdjust="spacingAndGlyphs" fill="#111" stroke="#111" stroke-width="0.35">Netherlands</text>
<text x="591.9" y="385.6" font-size="12.569832402234637" font-weight="400" textLength="62.1" lengthAdjust="spacingAndGlyphs" fill="#fff" stroke="#fff" stroke-width="2" stroke-opacity="0.85" stroke-linejoin="round">Purmerend</text>
<text x="591.9" y="385.6" font-size="12.569832402234637" font-weight="400" textLength="62.1" lengthAdjust="spacingAndGlyphs" fill="#3a3a3a" stroke="#3a3a3a" stroke-width="0.35">Purmerend</text>
<text x="694.3" y="382.3" font-size="12.430167597765411" font-weight="400" textLength="44.1" lengthAdjust="spacingAndGlyphs" fill="#fff" stroke="#fff" stroke-width="2" stroke-opacity="0.85" stroke-linejoin="round">Lelystad</text>
<text x="694.3" y="382.3" font-size="12.430167597765411" font-weight="400" textLength="44.1" lengthAdjust="spacingAndGlyphs" fill="#3a3a3a" stroke="#3a3a3a" stroke-width="0.35">Lelystad</text>
<text x="811.2" y="384.2" font-size="13.547486033519538" font-weight="400" textLength="36.0" lengthAdjust="spacingAndGlyphs" fill="#fff" stroke="#fff" stroke-width="2" stroke-opacity="0.85" stroke-linejoin="round">Zwolle</text>
<text x="811.2" y="384.2" font-size="13.547486033519538" font-weight="400" textLength="36.0" lengthAdjust="spacingAndGlyphs" fill="#3a3a3a" stroke="#3a3a3a" stroke-width="0.35">Zwolle</text>
<text x="913.2" y="429.4" font-size="13.826815642458069" font-weight="400" textLength="39.2" lengthAdjust="spacingAndGlyphs" fill="#fff" stroke="#fff" stroke-width="2" stroke-opacity="0.85" stroke-linejoin="round">Almelo</text>
<text x="913.2" y="429.4" font-size="13.826815642458069" font-weight="400" textLength="39.2" lengthAdjust="spacingAndGlyphs" fill="#3a3a3a" stroke="#3a3a3a" stroke-width="0.35">Almelo</text>
<text x="776.6" y="471.8" font-size="14.245810055865906" font-weight="400" textLength="57.2" lengthAdjust="spacingAndGlyphs" fill="#fff" stroke="#fff" stroke-width="2" stroke-opacity="0.85" stroke-linejoin="round">Apeldoorn</text>
<text x="776.6" y="471.8" font-size="14.245810055865906" font-weight="400" textLength="57.2" lengthAdjust="spacingAndGlyphs" fill="#3a3a3a" stroke="#3a3a3a" stroke-width="0.35">Apeldoorn</text>
<text x="948.4" y="470.2" font-size="13.966480446927374" font-weight="400" textLength="51.9" lengthAdjust="spacingAndGlyphs" fill="#fff" stroke="#fff" stroke-width="2" stroke-opacity="0.85" stroke-linejoin="round">Enschede</text>
<text x="948.4" y="470.2" font-size="13.966480446927374" font-weight="400" textLength="51.9" lengthAdjust="spacingAndGlyphs" fill="#3a3a3a" stroke="#3a3a3a" stroke-width="0.35">Enschede</text>
<text x="760.6" y="580.2" font-size="13.128491620111859" font-weight="400" textLength="53.3" lengthAdjust="spacingAndGlyphs" fill="#fff" stroke="#fff" stroke-width="2" stroke-opacity="0.85" stroke-linejoin="round">Nijmegen</text>
<text x="760.6" y="580.2" font-size="13.128491620111859" font-weight="400" textLength="53.3" lengthAdjust="spacingAndGlyphs" fill="#3a3a3a" stroke="#3a3a3a" stroke-width="0.35">Nijmegen</text>
<text x="903.1" y="583.2" font-size="13.687150837988924" font-weight="400" textLength="41.9" lengthAdjust="spacingAndGlyphs" fill="#fff" stroke="#fff" stroke-width="2" stroke-opacity="0.85" stroke-linejoin="round">Bocholt</text>
<text x="903.1" y="583.2" font-size="13.687150837988924" font-weight="400" textLength="41.9" lengthAdjust="spacingAndGlyphs" fill="#3a3a3a" stroke="#3a3a3a" stroke-width="0.35">Bocholt</text>
<text x="984.4" y="406.8" font-size="12.849162011173169" font-weight="400" textLength="45.6" lengthAdjust="spacingAndGlyphs" fill="#fff" stroke="#fff" stroke-width="2" stroke-opacity="0.85" stroke-linejoin="round">Nordhorn</text>
<text x="984.4" y="406.8" font-size="12.849162011173169" font-weight="400" textLength="45.6" lengthAdjust="spacingAndGlyphs" fill="#3a3a3a" stroke="#3a3a3a" stroke-width="0.35">Nordhorn</text>
<text x="441.7" y="585" font-size="11.592178770949658" font-weight="400" textLength="64.7" lengthAdjust="spacingAndGlyphs" fill="#fff" stroke="#fff" stroke-width="2" stroke-opacity="0.85" stroke-linejoin="round">Hellevoetsluis</text>
<text x="441.7" y="585" font-size="11.592178770949658" font-weight="400" textLength="64.7" lengthAdjust="spacingAndGlyphs" fill="#3a3a3a" stroke="#3a3a3a" stroke-width="0.35">Hellevoetsluis</text>
<text x="678.4" y="611.5" font-size="10.474860335195531" font-weight="400" textLength="10.6" lengthAdjust="spacingAndGlyphs" fill="#fff" stroke="#fff" stroke-width="2" stroke-opacity="0.85" stroke-linejoin="round">'s-</text>
<text x="678.4" y="611.5" font-size="10.474860335195531" font-weight="400" textLength="10.6" lengthAdjust="spacingAndGlyphs" fill="#3a3a3a" stroke="#3a3a3a" stroke-width="0.35">'s-</text>
<text x="643.7" y="624.5" font-size="14.664804469273744" font-weight="400" textLength="82.3" lengthAdjust="spacingAndGlyphs" fill="#fff" stroke="#fff" stroke-width="2" stroke-opacity="0.85" stroke-linejoin="round">Hertogenbosch</text>
<text x="643.7" y="624.5" font-size="14.664804469273744" font-weight="400" textLength="82.3" lengthAdjust="spacingAndGlyphs" fill="#3a3a3a" stroke="#3a3a3a" stroke-width="0.35">Hertogenbosch</text>
<text x="1036.3" y="380" font-size="10.754189944134064" font-weight="400" textLength="33.7" lengthAdjust="spacingAndGlyphs" fill="#fff" stroke="#fff" stroke-width="2" stroke-opacity="0.85" stroke-linejoin="round">Lingen</text>
<text x="1036.3" y="380" font-size="10.754189944134064" font-weight="400" textLength="33.7" lengthAdjust="spacingAndGlyphs" fill="#3a3a3a" stroke="#3a3a3a" stroke-width="0.35">Lingen</text>
<text x="1055" y="452" font-size="12.569832402234637" font-weight="400" textLength="15.0" lengthAdjust="spacingAndGlyphs" fill="#fff" stroke="#fff" stroke-width="2" stroke-opacity="0.85" stroke-linejoin="round">Rh</text>
<text x="1055" y="452" font-size="12.569832402234637" font-weight="400" textLength="15.0" lengthAdjust="spacingAndGlyphs" fill="#3a3a3a" stroke="#3a3a3a" stroke-width="0.35">Rh</text>
<circle cx="622.4" cy="391.5" r="1.9" fill="#111" stroke="#fff" stroke-width="0.8"/>
<circle cx="563.3" cy="425" r="1.9" fill="#111" stroke="#fff" stroke-width="0.8"/>
<circle cx="504.4" cy="517.5" r="1.9" fill="#111" stroke="#fff" stroke-width="0.8"/>
<circle cx="651.2" cy="514.3" r="1.9" fill="#111" stroke="#fff" stroke-width="0.8"/>
<circle cx="534.5" cy="563.6" r="1.9" fill="#111" stroke="#fff" stroke-width="0.8"/>
<circle cx="473.2" cy="589.5" r="1.9" fill="#111" stroke="#fff" stroke-width="0.8"/>
<circle cx="716.6" cy="387.5" r="1.9" fill="#111" stroke="#fff" stroke-width="0.8"/>
<circle cx="828.5" cy="389.6" r="1.9" fill="#111" stroke="#fff" stroke-width="0.8"/>
<circle cx="1006.5" cy="411" r="1.9" fill="#111" stroke="#fff" stroke-width="0.8"/>
<circle cx="932.4" cy="434.9" r="1.9" fill="#111" stroke="#fff" stroke-width="0.8"/>
<circle cx="805.3" cy="477" r="1.9" fill="#111" stroke="#fff" stroke-width="0.8"/>
<circle cx="974.5" cy="475.4" r="1.9" fill="#111" stroke="#fff" stroke-width="0.8"/>
<circle cx="785.9" cy="585.4" r="1.9" fill="#111" stroke="#fff" stroke-width="0.8"/>
<circle cx="923.1" cy="588.1" r="1.9" fill="#111" stroke="#fff" stroke-width="0.8"/>
<circle cx="609.2" cy="430.5" r="3" fill="#fff" stroke="#111" stroke-width="1.2"/><circle cx="609.2" cy="430.5" r="1.3" fill="#111"/>
<rect x="775.1" y="363.5" width="23.399999999999977" height="13.399999999999977" rx="2.2" fill="#fcd847" stroke="#2a2a2a" stroke-width="1"/>
<text x="786.8" y="373.41407999999996" font-size="8.9" font-weight="700" text-anchor="middle" fill="#222" textLength="17.6" lengthAdjust="spacingAndGlyphs">N50</text>
<rect x="826.9" y="504.7" width="30.399999999999977" height="12.300000000000011" rx="2.2" fill="#fcd847" stroke="#2a2a2a" stroke-width="1"/>
<text x="842.0999999999999" y="513.81856" font-size="8.2" font-weight="700" text-anchor="middle" fill="#222" textLength="22.6" lengthAdjust="spacingAndGlyphs">N348</text>
<rect x="704.4" y="565.2" width="30.899999999999977" height="11.699999999999932" rx="2.2" fill="#fcd847" stroke="#2a2a2a" stroke-width="1"/>
<text x="719.8499999999999" y="573.88464" font-size="7.9" font-weight="700" text-anchor="middle" fill="#222" textLength="23.0" lengthAdjust="spacingAndGlyphs">N323</text>
<rect x="969.7" y="579.3" width="18.699999999999932" height="11.800000000000068" rx="2.2" fill="#fcd847" stroke="#2a2a2a" stroke-width="1"/>
<text x="979.05" y="588.0569600000001" font-size="7.9" font-weight="700" text-anchor="middle" fill="#222" textLength="14.2" lengthAdjust="spacingAndGlyphs">67</text>
<rect x="1060.8" y="511.3" width="13.700000000000045" height="10.999999999999943" rx="2.2" fill="#fcd847" stroke="#2a2a2a" stroke-width="1"/>
<rect x="843" y="603" width="221" height="20" fill="#ffffff" fill-opacity="0.55"/>
<text x="847.2" y="617.4" font-size="12.4" font-weight="700" fill="#3d3d3d" textLength="129.2" lengthAdjust="spacingAndGlyphs">© MAPBOX © OPENSTREETMAP</text>
<text x="981.7" y="617.4" font-size="12.4" font-weight="700" fill="#222" stroke="#222" stroke-width="0.5" textLength="77.2" lengthAdjust="spacingAndGlyphs">IMPROVE THIS MAP</text>
<g>
<circle cx="353.2" cy="605" r="9.3" fill="#fff" stroke="#6c8ea3" stroke-width="1.6" opacity="0.95"/>
<path d="M348.6,609.6 L348.6,605 A4.6,4.6 0 1 1 353.2,609.6 Z" fill="#6c8ea3"/>
<path d="M353.6,601.6 L354.4,603.8 L356.6,604.6 L354.4,605.4 L353.6,607.6 L352.8,605.4 L350.6,604.6 L352.8,603.8 Z" fill="#fff"/>
<text x="365.5" y="611.4" font-size="16.5" font-weight="700" fill="#fff" stroke="#6c8ea3" stroke-width="2.2" paint-order="stroke" textLength="63" lengthAdjust="spacingAndGlyphs">mapbox</text>
</g>
<rect x="1025" y="377" width="29" height="86.5" rx="4" fill="#fff" stroke="rgba(0,0,0,0.12)" stroke-width="1.2"/>
<line x1="1025.5" y1="406.3" x2="1053.5" y2="406.3" stroke="#ddd" stroke-width="1"/>
<line x1="1025.5" y1="434.8" x2="1053.5" y2="434.8" stroke="#ddd" stroke-width="1"/>
<path d="M1034.8,391.6 H1044.2 M1039.5,386.9 V396.3" stroke="#333" stroke-width="2.1"/>
<path d="M1034.8,420.8 H1044.2" stroke="#333" stroke-width="2.1"/>
<path d="M1039.5,441.5 L1043.6,448.6 L1035.4,448.6 Z" fill="#333"/>
<path d="M1039.5,457.5 L1043.6,450.4 L1035.4,450.4 Z" fill="#ccc"/>
</svg>
</div>
<svg class="abs" style="left:16px;top:27px" width="40" height="24" viewBox="16 27 40 24" font-family="Liberation Sans, sans-serif">
<rect x="16" y="27" width="40" height="24" fill="#000"/>
<text x="19.4" y="38.8" font-size="8.6" fill="#f2f2f2" textLength="32.6" lengthAdjust="spacingAndGlyphs">Holding</text>
<text x="35.6" y="43.4" font-size="4.4" fill="#bdbdbd" textLength="9" lengthAdjust="spacingAndGlyphs">the</text>
<text x="20.6" y="49" font-size="8.2" fill="#f2f2f2" textLength="29.4" lengthAdjust="spacingAndGlyphs">Drones</text>
<path d="M24.4,28.4 L31.8,28.4 L29.6,31.2 L26.6,31.2 Z" fill="#e8e8e8"/>
<path d="M27.2,41 L33.2,40.6 L31,43.6 L28.6,42.6 Z" fill="#e8e8e8"/>
</svg>
<svg class="abs" style="left:0;top:0" width="256" height="961">
<g fill="none" stroke="#fff" stroke-width="2">
<rect x="19" y="111" width="5.8" height="5.8"/>
<rect x="27.2" y="111" width="5.8" height="5.8"/>
<rect x="19" y="120" width="5.8" height="5.8"/>
<rect x="27.2" y="120" width="5.8" height="5.8"/>
</g>
<g fill="#fff" fill-rule="evenodd">
<path d="M17.8,170 L24.3,170 L25.8,172 L34.2,172 Q35,172 35,172.8 L35,185.2 Q35,186 34.2,186 L17.8,186 Q17,186 17,185.2 L17,170.8 Q17,170 17.8,170 Z M19.6,174 L32.4,174 L32.4,183.8 L19.6,183.8 Z"/>
<path d="M18.6,230 L34,230 L34,243.2 L20.4,243.2 L20.4,244.6 Q20.4,245 20.8,245 L34,245 L34,247 L20.6,247 Q18.4,247 18.4,244.8 L18.4,231.2 Q18.4,230 18.6,230 Z M20.6,232 L32,232 L32,241.2 L20.6,241.2 Z"/>
<rect x="22.2" y="233.2" width="8.6" height="1.8"/>
</g>
<g fill="none" stroke="#fff" stroke-width="2" stroke-linejoin="round">
<path d="M21,291 L33,291 Q34,291 34,292 L34,299.5"/>
<path d="M19,294 L30,294 Q31,294 31,295 L31,301 Q31,302.4 30,302.4 L24.6,302.4 L20.6,305.4 L20.6,302.4 L19,302.4 Q18,302.4 18,301 L18,295 Q18,294 19,294 Z"/>
</g>
<g fill="none" stroke="#fff" stroke-width="2">
<path d="M26,366 C23,363 20,360 20,356.5 A6,6 0 0 1 32,356.5 C32,360 29,363 26,366 Z"/>
<circle cx="26" cy="356.5" r="2.6"/>
</g>
<g fill="none" stroke="#fff" stroke-width="2.1" stroke-linecap="round">
<path d="M25.4,413.4 L27.1,411.9 A3.4,3.4 0 0 1 32.0,416.7 L29.3,419.5 A3.4,3.4 0 0 1 24.6,419.6"/>
<path d="M26.6,423.6 L24.9,425.1 A3.4,3.4 0 0 1 20.0,420.3 L22.7,417.5 A3.4,3.4 0 0 1 27.4,417.4"/>
</g>
<g fill="#fff" fill-rule="evenodd">
<path d="M18,926 L34,926 Q35,926 35,927 L35,941 Q35,942 34,942 L18,942 Q17,942 17,941 L17,927 Q17,926 18,926 Z M19.8,930 L24,930 L24,939.8 L19.8,939.8 Z M26,930 L32.3,930 L32.3,939.8 L26,939.8 Z"/>
<rect x="21" y="932.4" width="1.8" height="1.8"/>
<rect x="21" y="936.2" width="1.8" height="1.8"/>
</g>
</svg>
<svg class="abs" style="left:290px;top:30px" width="40" height="45">
<path d="M22.5,14.5 L12.5,25 L22.5,35.5" fill="none" stroke="#fff" stroke-width="2" stroke-linecap="round" stroke-linejoin="round"/>
</svg>
<svg class="abs" style="left:1800px;top:25px" width="110" height="60">
<defs><clipPath id="uc"><circle cx="29" cy="30" r="14.2"/></clipPath></defs>
<circle cx="29" cy="30" r="14.2" fill="none" stroke="#a8a6a6" stroke-width="1.6"/>
<circle cx="28.9" cy="26.1" r="5.7" fill="#a8a6a6"/>
<ellipse cx="29" cy="41.5" rx="11.5" ry="8" fill="#a8a6a6" clip-path="url(#uc)"/>
<rect x="59.7" y="9.7" width="32.6" height="40.6" rx="5" fill="none" stroke="#6b6b6b" stroke-width="1.4"/>
<g stroke="#4b5563" stroke-width="1.2" fill="none" stroke-linecap="round">
<circle cx="76" cy="27.9" r="2.7"/>
<path d="M76,21.6 L76,22.6 M76,33.2 L76,34.2 M69.7,27.9 L70.7,27.9 M81.3,27.9 L82.3,27.9 M71.5,23.4 L72.2,24.1 M79.8,31.7 L80.5,32.4 M71.5,32.4 L72.2,31.7 M79.8,24.1 L80.5,23.4"/>
</g>
</svg>

<div class="t" style="left:71.32px;top:30.47px;font-size:17.89px;transform:scaleX(0.6650);color:#ffffff;-webkit-text-stroke:0.3px #ffffff;">HTD-LIVESTREAMS</div>
<div class="t" style="left:51.43px;top:109.39px;font-size:15.07px;transform:scaleX(0.6822);color:#ffffff;-webkit-text-stroke:0.3px #ffffff;">DASHBOARD</div>
<div class="t" style="left:51.40px;top:169.39px;font-size:15.07px;transform:scaleX(0.7080);color:#ffffff;-webkit-text-stroke:0.3px #ffffff;">PROJECTEN</div>
<div class="t" style="left:51.43px;top:229.17px;font-size:15.51px;transform:scaleX(0.6673);color:#ffffff;-webkit-text-stroke:0.3px #ffffff;">LIBRARY</div>
<div class="t" style="left:51.72px;top:289.39px;font-size:15.07px;transform:scaleX(0.7061);color:#ffffff;-webkit-text-stroke:0.3px #ffffff;">CHAT</div>
<div class="t" style="left:51.41px;top:349.17px;font-size:15.51px;transform:scaleX(0.6814);color:#ffffff;-webkit-text-stroke:0.3px #ffffff;">MAP</div>
<div class="t" style="left:51.39px;top:409.39px;font-size:15.07px;transform:scaleX(0.7187);color:#ffffff;-webkit-text-stroke:0.3px #ffffff;">LINKS</div>
<div class="t" style="left:51.73px;top:925.39px;font-size:15.07px;transform:scaleX(0.6903);color:#ffffff;-webkit-text-stroke:0.3px #ffffff;">COLLAPSE SIDEBAR</div>
<div class="t" style="left:331.00px;top:36.50px;font-size:35.63px;transform:scaleX(0.6403);color:#a7a5a5;-webkit-text-stroke:1.2px #a7a5a5;">DASHBOARD</div>
<div class="t" style="left:319.72px;top:120.35px;font-size:30.99px;transform:scaleX(0.6277);color:#a7a5a5;-webkit-text-stroke:1px #a7a5a5;">OPERATION CENTRE</div>
<div class="t" style="left:335.81px;top:198.35px;font-size:15.14px;transform:scaleX(0.6943);color:#596070;-webkit-text-stroke:0.25px #596070;">ACTIEVE PROJECTEN</div>
<div class="t" style="left:723.39px;top:198.35px;font-size:15.14px;transform:scaleX(0.6979);color:#596070;-webkit-text-stroke:0.25px #596070;">DRONES ACTIEF</div>
<div class="t" style="left:1111.40px;top:198.35px;font-size:15.14px;transform:scaleX(0.6878);color:#596070;-webkit-text-stroke:0.25px #596070;">INCIDENTEN VANDAAG</div>
<div class="t" style="left:1499.71px;top:198.35px;font-size:15.14px;transform:scaleX(0.6875);color:#596070;-webkit-text-stroke:0.25px #596070;">GEBRUIKERS ONLINE</div>
<div class="t" style="left:335.51px;top:222.34px;font-size:24.08px;transform:scaleX(0.9806);color:#a5a4a4;-webkit-text-stroke:0.9px #a5a4a4;">0</div>
<div class="t" style="left:1111.51px;top:222.34px;font-size:24.08px;transform:scaleX(0.9806);color:#a5a4a4;-webkit-text-stroke:0.9px #a5a4a4;">0</div>
<div class="t" style="left:1499.51px;top:222.34px;font-size:24.08px;transform:scaleX(0.9806);color:#a5a4a4;-webkit-text-stroke:0.9px #a5a4a4;">0</div>
<div class="t" style="left:1499.79px;top:261.60px;font-size:13.66px;transform:scaleX(0.6677);color:#9ca3af;-webkit-text-stroke:0.3px #9ca3af;">GEEN GEBRUIKERS ONLINE.</div>
<div class="t" style="left:335.66px;top:337.80px;font-size:16.23px;transform:scaleX(0.6473);color:#a7a5a5;-webkit-text-stroke:0.8px #a7a5a5;">LIVE KAART</div>
<div class="t" style="left:1111.67px;top:339.03px;font-size:15.77px;transform:scaleX(0.6651);color:#a7a5a5;-webkit-text-stroke:0.8px #a7a5a5;">LAATSTE INCIDENTEN</div>
<div class="t" style="left:1111.73px;top:370.39px;font-size:15.07px;transform:scaleX(0.6899);color:#a3a3a3;-webkit-text-stroke:0.3px #a3a3a3;">GEEN INCIDENTEN GEVONDEN.</div>
<div class="t" style="left:1111.67px;top:443.03px;font-size:15.77px;transform:scaleX(0.6643);color:#a7a5a5;-webkit-text-stroke:0.8px #a7a5a5;">LAATSTE ACTIVITEITEN</div>
<div class="t" style="left:1111.73px;top:474.39px;font-size:15.07px;transform:scaleX(0.6920);color:#a3a3a3;-webkit-text-stroke:0.3px #a3a3a3;">GEEN ACTIVITEITEN GEVONDEN.</div>
<div class="t" style="left:335.65px;top:682.08px;font-size:15.14px;transform:scaleX(0.7074);color:#a7a5a5;-webkit-text-stroke:0.8px #a7a5a5;">PROJECTEN/MISSIES</div>
<div class="t" style="left:335.73px;top:714.39px;font-size:15.07px;transform:scaleX(0.6903);color:#a3a3a3;-webkit-text-stroke:0.3px #a3a3a3;">GEEN PROJECTEN GEVONDEN.</div>
<div class="t" style="left:1112.09px;top:683.03px;font-size:15.77px;transform:scaleX(0.6616);color:#a7a5a5;-webkit-text-stroke:0.8px #a7a5a5;">SNELLE ACTIES</div>
<div class="t" style="left:1127.40px;top:722.39px;font-size:15.07px;transform:scaleX(0.7107);color:#ffffff;-webkit-text-stroke:0.3px #ffffff;">NIEUWE PROJECT STARTEN</div>
<div class="t" style="left:1319.40px;top:722.39px;font-size:15.07px;transform:scaleX(0.7145);color:#ffffff;-webkit-text-stroke:0.3px #ffffff;">BEKIJK ALLE STREAMS</div>

</body></html>
